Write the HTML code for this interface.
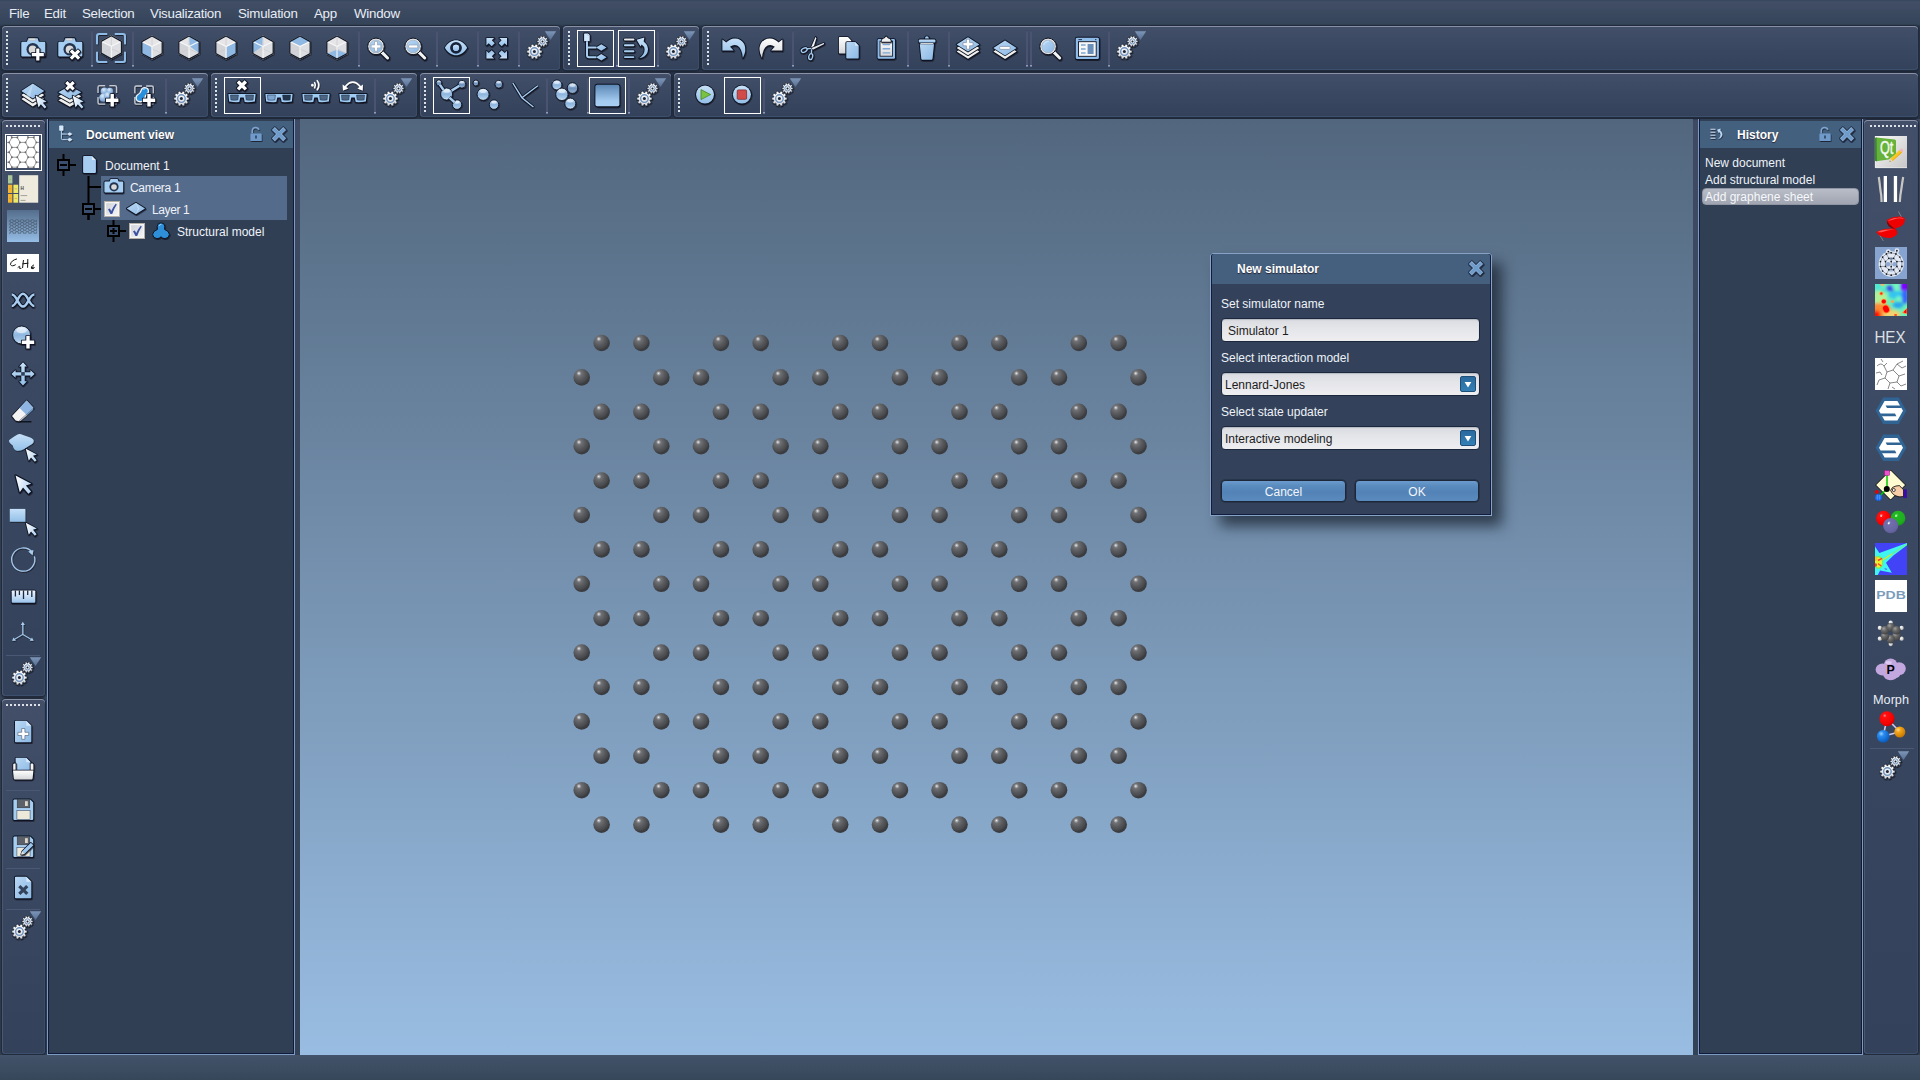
<!DOCTYPE html><html><head><meta charset="utf-8"><title>SAMSON</title><style>
*{box-sizing:border-box;margin:0;padding:0}
html,body{width:1920px;height:1080px;overflow:hidden}
body{position:relative;background:linear-gradient(#3e4a63 119px,#38465b 570px,#334256 1055px);font-family:"Liberation Sans",sans-serif;font-size:12px;color:#e9eef6}
.a{position:absolute}
#menubar{left:0;top:0;width:1920px;height:26px;background:linear-gradient(#364659 0,#424e66 2px,#344459 24px,#2c394c 26px)}
#menubar span{position:absolute;top:6px;font-size:13.3px;letter-spacing:-0.25px;line-height:15px;color:#e8edf5;white-space:nowrap}
#tbarea{left:0;top:26px;width:1920px;height:93px;background:#28344a}
.tb{position:absolute;border-radius:4px;background:linear-gradient(#434f69 0%,#3a4861 45%,#33425a 100%);box-shadow:inset 0 1px 0 #8891a6,inset 1px 0 0 #4a5770,inset -1px 0 0 #3b4c68,inset 0 -1px 0 #3c4f6d,0 0 0 1px #222b3c,0 1px 2px 1px #1d2533}
.hd{position:absolute;width:2px;background:repeating-linear-gradient(#dde1e8 0 2px,transparent 2px 4px)}
.hdh{position:absolute;height:2px;background:repeating-linear-gradient(90deg,#dde1e8 0 2px,transparent 2px 4px)}
.sep{position:absolute;width:2px;background:linear-gradient(#3a4560 0,#4a5372 2px,#4a5372 calc(100% - 2.5px),#8f9bbe calc(100% - 1.5px),#6a7698 calc(100% - 0.5px),#3a4560 100%)}
.seph{position:absolute;height:1px;background:#4b5875}
.sel{position:absolute;border:1px solid #fff;width:37px;height:37px}
.ic{position:absolute;overflow:visible}
#status{left:0;top:1055px;width:1920px;height:25px;background:linear-gradient(#42536a,#37475a)}
.panel{position:absolute;background:#303f54;box-shadow:inset 1px 0 0 #7e9ac0,inset -1px 0 0 #7e9ac0,inset 0 -1px 0 #7e9ac0,inset 2px 0 0 #0e1b3c,inset -2px 0 0 #0e1b3c,inset 0 -2px 0 #0e1b3c}
.phead{position:absolute;left:2px;right:2px;top:2px;height:27px;background:#44607f}
.phead b{position:absolute;top:7px;font-size:12px;line-height:15px;color:#fff;white-space:nowrap;text-shadow:0 1px 1px #223}
#view{left:300px;top:119px;width:1393px;height:936px;background:linear-gradient(#52677e,#99bde2)}
.t{position:absolute;white-space:nowrap;font-size:12px;line-height:14px;color:#eef2f8}
</style></head><body>
<svg width="0" height="0" style="position:absolute"><defs>
<linearGradient id="gb" x1="0" y1="0" x2="0" y2="1"><stop offset="0" stop-color="#c6e0f8"/><stop offset="1" stop-color="#93bfe8"/></linearGradient>
<linearGradient id="gb2" x1="0" y1="0" x2="1" y2="1"><stop offset="0" stop-color="#b9d8f5"/><stop offset="1" stop-color="#8db9e4"/></linearGradient>
<linearGradient id="gw" x1="0" y1="0" x2="0" y2="1"><stop offset="0" stop-color="#ffffff"/><stop offset="1" stop-color="#d4d6da"/></linearGradient>
<linearGradient id="gsq" x1="0" y1="0" x2="0" y2="1"><stop offset="0" stop-color="#5c86b4"/><stop offset="0.75" stop-color="#a3cbf0"/><stop offset="1" stop-color="#a8d0f4"/></linearGradient>
<linearGradient id="gtri" x1="0" y1="0" x2="0" y2="1"><stop offset="0" stop-color="#7d96b8"/><stop offset="1" stop-color="#566f92"/></linearGradient>
<linearGradient id="gview" x1="0" y1="0" x2="0" y2="1"><stop offset="0" stop-color="#546d8c"/><stop offset="1" stop-color="#96bde6"/></linearGradient>
<linearGradient id="gqt" x1="0" y1="0" x2="1" y2="1"><stop offset="0" stop-color="#fafafa"/><stop offset="1" stop-color="#c6c6c6"/></linearGradient>
<linearGradient id="bb" x1="0" y1="0" x2="0" y2="1"><stop offset="0" stop-color="#eef6fd"/><stop offset="0.22" stop-color="#b4d2f0"/><stop offset="0.5" stop-color="#8eb5de"/><stop offset="0.8" stop-color="#a6c9ea"/><stop offset="1" stop-color="#e2f1fc"/></linearGradient>
<linearGradient id="bbd" x1="0" y1="0" x2="0" y2="1"><stop offset="0" stop-color="#d4e4f4"/><stop offset="0.25" stop-color="#94b4d8"/><stop offset="0.55" stop-color="#6f90b8"/><stop offset="0.85" stop-color="#8aa9cc"/><stop offset="1" stop-color="#c4d8ec"/></linearGradient>
<radialGradient id="gr" cx="0.35" cy="0.3" r="0.7"><stop offset="0" stop-color="#ff8a8a"/><stop offset="0.18" stop-color="#ff1010"/><stop offset="0.8" stop-color="#f40000"/><stop offset="1" stop-color="#d80000"/></radialGradient>
<radialGradient id="gg" cx="0.4" cy="0.3" r="0.7"><stop offset="0" stop-color="#8fe08f"/><stop offset="0.18" stop-color="#22b822"/><stop offset="0.8" stop-color="#1eae1e"/><stop offset="1" stop-color="#189a18"/></radialGradient>
<radialGradient id="gp" cx="0.4" cy="0.3" r="0.7"><stop offset="0" stop-color="#d0d0f0"/><stop offset="0.15" stop-color="#7070ac"/><stop offset="0.8" stop-color="#6866a2"/><stop offset="1" stop-color="#5e5c98"/></radialGradient>
<radialGradient id="gbl" cx="0.35" cy="0.3" r="0.7"><stop offset="0" stop-color="#9ad0ff"/><stop offset="0.3" stop-color="#2a8cf0"/><stop offset="1" stop-color="#0a5cc0"/></radialGradient>
<radialGradient id="gor" cx="0.35" cy="0.3" r="0.7"><stop offset="0" stop-color="#ffe09a"/><stop offset="0.3" stop-color="#f5a81c"/><stop offset="1" stop-color="#c87800"/></radialGradient>
<radialGradient id="gc" cx="0.35" cy="0.3" r="0.7"><stop offset="0" stop-color="#a0a0a0"/><stop offset="0.4" stop-color="#6a6a6a"/><stop offset="1" stop-color="#444"/></radialGradient>
<radialGradient id="gh" cx="0.35" cy="0.3" r="0.7"><stop offset="0" stop-color="#fff"/><stop offset="1" stop-color="#bbb"/></radialGradient>
<linearGradient id="gcur" x1="0" y1="0" x2="1" y2="1"><stop offset="0" stop-color="#ffffff"/><stop offset="1" stop-color="#a9cdf0"/></linearGradient>
<linearGradient id="grul" x1="0" y1="0" x2="0" y2="1"><stop offset="0" stop-color="#f2f8fe"/><stop offset="1" stop-color="#9ac4ec"/></linearGradient>
<filter id="bl1"><feGaussianBlur stdDeviation="0.7"/></filter>
<radialGradient id="br" cx="0.4" cy="0.3" r="0.75"><stop offset="0" stop-color="#dcebfa"/><stop offset="0.45" stop-color="#9dc0e6"/><stop offset="0.85" stop-color="#7a9fcb"/><stop offset="1" stop-color="#6488b4"/></radialGradient>
<filter id="bl2"><feGaussianBlur stdDeviation="0.6"/></filter>
<filter id="sh" x="-30%" y="-30%" width="170%" height="170%"><feDropShadow dx="0.6" dy="1" stdDeviation="0.7" flood-color="#0a0f1a" flood-opacity="0.75"/></filter>
</defs></svg>
<div id="menubar" class="a">
<span style="left:9px">File</span>
<span style="left:44px">Edit</span>
<span style="left:82px">Selection</span>
<span style="left:150px">Visualization</span>
<span style="left:238px">Simulation</span>
<span style="left:314px">App</span>
<span style="left:354px">Window</span>
</div>
<div id="tbarea" class="a"></div>
<div class="tb" style="left:2px;top:26px;width:558px;height:44px"><div class="hd" style="left:4px;top:5px;height:34px"></div><svg class="ic" style="left:14px;top:6px" width="32" height="32" viewBox="0 0 32 32"><g stroke="#0c1322" stroke-width="1.7" stroke-linejoin="round" paint-order="stroke" filter="url(#sh)"><path d="M6.4 9.8h4.6l1.2-3.6h9.4l1.2 3.6h5.4q1.1 0 1.1 1.1v12.6q0 1.1-1.1 1.1h-21.8q-1.1 0-1.1-1.1v-12.6q0-1.1 1.1-1.1z" fill="#a6cdf2"/><rect x="13" y="6.6" width="6.6" height="1.8" rx="0.9" fill="#ddd" stroke="#8a8a8a" stroke-width="0.5"/></g><circle cx="16.8" cy="17.2" r="6.3" fill="#23344e" stroke="none"/><circle cx="16.6" cy="17.4" r="3.9" fill="#d9d9d9" stroke="none"/><g stroke="#0c1322" stroke-width="1.7" stroke-linejoin="round" paint-order="stroke" filter="url(#sh)"><path d="M20.2 16.6h3.2v4.4h4.4v3.2h-4.4v4.4h-3.2v-4.4h-4.4v-3.2h4.4z" fill="#fff"/></g></svg><svg class="ic" style="left:51px;top:6px" width="32" height="32" viewBox="0 0 32 32"><g stroke="#0c1322" stroke-width="1.7" stroke-linejoin="round" paint-order="stroke" filter="url(#sh)"><path d="M6.4 9.8h4.6l1.2-3.6h9.4l1.2 3.6h5.4q1.1 0 1.1 1.1v12.6q0 1.1-1.1 1.1h-21.8q-1.1 0-1.1-1.1v-12.6q0-1.1 1.1-1.1z" fill="#a6cdf2"/><rect x="13" y="6.6" width="6.6" height="1.8" rx="0.9" fill="#ddd" stroke="#8a8a8a" stroke-width="0.5"/></g><circle cx="16.8" cy="17.2" r="6.3" fill="#23344e" stroke="none"/><circle cx="16.6" cy="17.4" r="3.9" fill="#d9d9d9" stroke="none"/><g stroke="#0c1322" stroke-width="1.7" stroke-linejoin="round" paint-order="stroke" filter="url(#sh)"><g transform="rotate(45 22 22.6)"><path d="M20.4 16.8h3.2v4.2h4.2v3.2h-4.2v4.2h-3.2v-4.2h-4.2v-3.2h4.2z" fill="#fff"/></g></g></svg><svg class="ic" style="left:93px;top:6px" width="32" height="32" viewBox="0 0 32 32"><g fill="none" stroke="#8ebbe6" stroke-width="2" filter="url(#sh)"><path d="M2 12.2v-8.2q0 -2 2 -2h8.2" /><path d="M30 12.2v-8.2q0 -2 -2 -2h-8.2" /><path d="M2 19.8v8.2q0 2 2 2h8.2" /><path d="M30 19.8v8.2q0 2 -2 2h-8.2" /></g><g transform="translate(0.3,-0.3)"><g filter="url(#sh)"><polygon points="16,4.05 26.2378,9.62622 26.237,21.4751 16,27.15 5.76296,21.4751 5.76221,9.62622" fill="#dcdde0"/><polygon points="16,3.4 26.8,9.3 16,14.6 5.2,9.3" fill="#e6e6e8"/><polygon points="5.2,9.3 16,14.6 16,27.8 5.2,21.8" fill="#d3d4d8"/><polygon points="16,14.6 26.8,9.3 26.8,21.8 16,27.8" fill="#dedfe2"/><path d="M16 17L5.2 21.8M16 17L26.8 21.8M16 17L16 3.4" stroke="#cbccd0" stroke-width="0.8" fill="none"/><path d="M16 14.6L5.8 9.6M16 14.6L26.2 9.6M16 14.6L16 27.2" stroke="#f8f8f8" stroke-width="1.1" fill="none"/><polygon points="16,4.05 26.2378,9.62622 26.237,21.4751 16,27.15 5.76296,21.4751 5.76221,9.62622" fill="none" stroke="#141a28" stroke-width="1.3" stroke-linejoin="round"/></g></g></svg><svg class="ic" style="left:134px;top:6px" width="32" height="32" viewBox="0 0 32 32"><g filter="url(#sh)"><polygon points="16,4.05 26.2378,9.62622 26.237,21.4751 16,27.15 5.76296,21.4751 5.76221,9.62622" fill="#dcdde0"/><polygon points="16,3.4 26.8,9.3 16,14.6 5.2,9.3" fill="#e6e6e8"/><polygon points="5.2,9.3 16,14.6 16,27.8 5.2,21.8" fill="#d3d4d8"/><polygon points="16,14.6 26.8,9.3 26.8,21.8 16,27.8" fill="#dedfe2"/><path d="M16 17L5.2 21.8M16 17L26.8 21.8M16 17L16 3.4" stroke="#cbccd0" stroke-width="0.8" fill="none"/><polygon points="5.55795,9.90156 15.4263,15.0011 15.652,27.1926 5.79113,21.4251" fill="#8fb8e2"/><path d="M16 14.6L5.8 9.6M16 14.6L26.2 9.6M16 14.6L16 27.2" stroke="#f8f8f8" stroke-width="1.1" fill="none"/><polygon points="16,4.05 26.2378,9.62622 26.237,21.4751 16,27.15 5.76296,21.4751 5.76221,9.62622" fill="none" stroke="#141a28" stroke-width="1.3" stroke-linejoin="round"/></g></svg><svg class="ic" style="left:171px;top:6px" width="32" height="32" viewBox="0 0 32 32"><g filter="url(#sh)"><polygon points="16,4.05 26.2378,9.62622 26.237,21.4751 16,27.15 5.76296,21.4751 5.76221,9.62622" fill="#dcdde0"/><polygon points="16,3.4 26.8,9.3 16,14.6 5.2,9.3" fill="#e6e6e8"/><polygon points="5.2,9.3 16,14.6 16,27.8 5.2,21.8" fill="#d3d4d8"/><polygon points="16,14.6 26.8,9.3 26.8,21.8 16,27.8" fill="#dedfe2"/><path d="M16 17L5.2 21.8M16 17L26.8 21.8M16 17L16 3.4" stroke="#cbccd0" stroke-width="0.8" fill="none"/><polygon points="16.3639,3.998 26.1869,9.63778 26.4548,21.1911 16.6429,14.3232" fill="#8fb8e2"/><path d="M16 14.6L5.8 9.6M16 14.6L26.2 9.6M16 14.6L16 27.2" stroke="#f8f8f8" stroke-width="1.1" fill="none"/><polygon points="16,4.05 26.2378,9.62622 26.237,21.4751 16,27.15 5.76296,21.4751 5.76221,9.62622" fill="none" stroke="#141a28" stroke-width="1.3" stroke-linejoin="round"/></g></svg><svg class="ic" style="left:208px;top:6px" width="32" height="32" viewBox="0 0 32 32"><g filter="url(#sh)"><polygon points="16,4.05 26.2378,9.62622 26.237,21.4751 16,27.15 5.76296,21.4751 5.76221,9.62622" fill="#dcdde0"/><polygon points="16,3.4 26.8,9.3 16,14.6 5.2,9.3" fill="#e6e6e8"/><polygon points="5.2,9.3 16,14.6 16,27.8 5.2,21.8" fill="#d3d4d8"/><polygon points="16,14.6 26.8,9.3 26.8,21.8 16,27.8" fill="#dedfe2"/><path d="M16 17L5.2 21.8M16 17L26.8 21.8M16 17L16 3.4" stroke="#cbccd0" stroke-width="0.8" fill="none"/><polygon points="16.5737,15.0011 26.442,9.90156 26.2089,21.4251 16.348,27.1926" fill="#8fb8e2"/><path d="M16 14.6L5.8 9.6M16 14.6L26.2 9.6M16 14.6L16 27.2" stroke="#f8f8f8" stroke-width="1.1" fill="none"/><polygon points="16,4.05 26.2378,9.62622 26.237,21.4751 16,27.15 5.76296,21.4751 5.76221,9.62622" fill="none" stroke="#141a28" stroke-width="1.3" stroke-linejoin="round"/></g></svg><svg class="ic" style="left:245px;top:6px" width="32" height="32" viewBox="0 0 32 32"><g filter="url(#sh)"><polygon points="16,4.05 26.2378,9.62622 26.237,21.4751 16,27.15 5.76296,21.4751 5.76221,9.62622" fill="#dcdde0"/><polygon points="16,3.4 26.8,9.3 16,14.6 5.2,9.3" fill="#e6e6e8"/><polygon points="5.2,9.3 16,14.6 16,27.8 5.2,21.8" fill="#d3d4d8"/><polygon points="16,14.6 26.8,9.3 26.8,21.8 16,27.8" fill="#dedfe2"/><path d="M16 17L5.2 21.8M16 17L26.8 21.8M16 17L16 3.4" stroke="#cbccd0" stroke-width="0.8" fill="none"/><polygon points="15.6361,3.998 15.3571,14.3232 5.54523,21.1911 5.81311,9.63778" fill="#8fb8e2"/><path d="M16 14.6L5.8 9.6M16 14.6L26.2 9.6M16 14.6L16 27.2" stroke="#f8f8f8" stroke-width="1.1" fill="none"/><polygon points="16,4.05 26.2378,9.62622 26.237,21.4751 16,27.15 5.76296,21.4751 5.76221,9.62622" fill="none" stroke="#141a28" stroke-width="1.3" stroke-linejoin="round"/></g></svg><svg class="ic" style="left:282px;top:6px" width="32" height="32" viewBox="0 0 32 32"><g filter="url(#sh)"><polygon points="16,4.05 26.2378,9.62622 26.237,21.4751 16,27.15 5.76296,21.4751 5.76221,9.62622" fill="#dcdde0"/><polygon points="16,3.4 26.8,9.3 16,14.6 5.2,9.3" fill="#e6e6e8"/><polygon points="5.2,9.3 16,14.6 16,27.8 5.2,21.8" fill="#d3d4d8"/><polygon points="16,14.6 26.8,9.3 26.8,21.8 16,27.8" fill="#dedfe2"/><path d="M16 17L5.2 21.8M16 17L26.8 21.8M16 17L16 3.4" stroke="#cbccd0" stroke-width="0.8" fill="none"/><polygon points="16,4.1 26.1001,9.29028 16,13.9 5.89993,9.29028" fill="#8fb8e2"/><path d="M16 14.6L5.8 9.6M16 14.6L26.2 9.6M16 14.6L16 27.2" stroke="#f8f8f8" stroke-width="1.1" fill="none"/><polygon points="16,4.05 26.2378,9.62622 26.237,21.4751 16,27.15 5.76296,21.4751 5.76221,9.62622" fill="none" stroke="#141a28" stroke-width="1.3" stroke-linejoin="round"/></g></svg><svg class="ic" style="left:319px;top:6px" width="32" height="32" viewBox="0 0 32 32"><g filter="url(#sh)"><polygon points="16,4.05 26.2378,9.62622 26.237,21.4751 16,27.15 5.76296,21.4751 5.76221,9.62622" fill="#dcdde0"/><polygon points="16,3.4 26.8,9.3 16,14.6 5.2,9.3" fill="#e6e6e8"/><polygon points="5.2,9.3 16,14.6 16,27.8 5.2,21.8" fill="#d3d4d8"/><polygon points="16,14.6 26.8,9.3 26.8,21.8 16,27.8" fill="#dedfe2"/><path d="M16 17L5.2 21.8M16 17L26.8 21.8M16 17L16 3.4" stroke="#cbccd0" stroke-width="0.8" fill="none"/><polygon points="16,17.7 26.1003,21.8194 16,27.1 5.89973,21.8194" fill="#8fb8e2"/><path d="M16 14.6L5.8 9.6M16 14.6L26.2 9.6M16 14.6L16 27.2" stroke="#f8f8f8" stroke-width="1.1" fill="none"/><polygon points="16,4.05 26.2378,9.62622 26.237,21.4751 16,27.15 5.76296,21.4751 5.76221,9.62622" fill="none" stroke="#141a28" stroke-width="1.3" stroke-linejoin="round"/></g></svg><svg class="ic" style="left:360px;top:6px" width="32" height="32" viewBox="0 0 32 32"><g filter="url(#sh)"><path d="M20.5 20.9L25.6 26" stroke="#0c1322" stroke-width="5" stroke-linecap="round"/><path d="M20 20.4L25.6 26" stroke="#f4f4f4" stroke-width="3" stroke-linecap="round"/><circle cx="14" cy="14.4" r="8.3" fill="#eaeaea" stroke="#0c1322" stroke-width="1"/><circle cx="14" cy="14.4" r="6.4" fill="url(#gb2)" stroke="#9aa4b0" stroke-width="0.6"/><g stroke="#8a97a8" stroke-width="0.6"><path d="M12.5 9.6h3v3.3h3.3v3h-3.3v3.3h-3v-3.3h-3.3v-3h3.3z" fill="#fff"/></g></g></svg><svg class="ic" style="left:397px;top:6px" width="32" height="32" viewBox="0 0 32 32"><g filter="url(#sh)"><path d="M20.6 20.9L25.7 26" stroke="#0c1322" stroke-width="5" stroke-linecap="round"/><path d="M20.1 20.4L25.7 26" stroke="#f4f4f4" stroke-width="3" stroke-linecap="round"/><circle cx="14.1" cy="14.4" r="8.3" fill="#eaeaea" stroke="#0c1322" stroke-width="1"/><circle cx="14.1" cy="14.4" r="6.4" fill="url(#gb2)" stroke="#9aa4b0" stroke-width="0.6"/><rect x="9.5" y="13" width="9.2" height="2.9" rx="1" fill="#fff" stroke="#8a97a8" stroke-width="0.6"/></g></svg><svg class="ic" style="left:438px;top:6px" width="32" height="32" viewBox="0 0 32 32"><g stroke="#0c1322" stroke-width="1.7" stroke-linejoin="round" paint-order="stroke" filter="url(#sh)"><path d="M4.9 15.8 C8 10.2 12 8.3 16 8.3 C20 8.3 24 10.2 27.1 15.8 C24 21.4 20 23.3 16 23.3 C12 23.3 8 21.4 4.9 15.8Z" fill="url(#gb)"/></g><circle cx="16" cy="15.8" r="4.5" fill="none" stroke="#16233a" stroke-width="2.8"/><circle cx="16" cy="15.8" r="3.1" fill="url(#gb)"/></svg><svg class="ic" style="left:479px;top:6px" width="32" height="32" viewBox="0 0 32 32"><g stroke="#0c1322" stroke-width="1.4" stroke-linejoin="round" paint-order="stroke" filter="url(#sh)"><path d="M0 0 L7 0 L7 7 L4.9 4.9 L2.2 7.6 L-0.6 4.8 L2.1 2.1 Z" transform="translate(26,5.9) scale(1.1) translate(-7,0)" fill="url(#gb)"/><path d="M0 0 L7 0 L7 7 L4.9 4.9 L2.2 7.6 L-0.6 4.8 L2.1 2.1 Z" transform="translate(5.4,5.9) scale(-1.1,1.1) translate(-7,0)" fill="url(#gb)"/><path d="M0 0 L7 0 L7 7 L4.9 4.9 L2.2 7.6 L-0.6 4.8 L2.1 2.1 Z" transform="translate(26,26.5) scale(1.1,-1.1) translate(-7,0)" fill="url(#gb)"/><path d="M0 0 L7 0 L7 7 L4.9 4.9 L2.2 7.6 L-0.6 4.8 L2.1 2.1 Z" transform="translate(5.4,26.5) scale(-1.1,-1.1) translate(-7,0)" fill="url(#gb)"/></g></svg><svg class="ic" style="left:522px;top:6px" width="32" height="32" viewBox="0 0 32 32"><g filter="url(#sh)"><path d="M17.99 18.30 L17.99 20.90 L16.25 20.95 L15.92 21.95 L17.30 23.01 L15.78 25.11 L14.34 24.13 L13.49 24.75 L13.98 26.42 L11.51 27.22 L10.93 25.58 L9.87 25.58 L9.29 27.22 L6.82 26.42 L7.31 24.75 L6.46 24.13 L5.02 25.11 L3.50 23.01 L4.88 21.95 L4.55 20.95 L2.81 20.90 L2.81 18.30 L4.55 18.25 L4.88 17.25 L3.50 16.19 L5.02 14.09 L6.46 15.07 L7.31 14.45 L6.82 12.78 L9.29 11.98 L9.87 13.62 L10.93 13.62 L11.51 11.98 L13.98 12.78 L13.49 14.45 L14.34 15.07 L15.78 14.09 L17.30 16.19 L15.92 17.25 L16.25 18.25 Z" fill="url(#gw)" stroke="#1a2233" stroke-width="0.7" stroke-linejoin="round"/><circle cx="10.4" cy="19.6" r="3.8" fill="none" stroke="#6f93bf" stroke-width="1.4"/><circle cx="10.4" cy="19.6" r="1.5" fill="#1c2638"/><path d="M24.02 8.45 L24.02 10.35 L22.69 10.36 L22.46 11.08 L23.52 11.88 L22.41 13.41 L21.32 12.64 L20.71 13.09 L21.10 14.36 L19.31 14.94 L18.88 13.68 L18.12 13.68 L17.69 14.94 L15.90 14.36 L16.29 13.09 L15.68 12.64 L14.59 13.41 L13.48 11.88 L14.54 11.08 L14.31 10.36 L12.98 10.35 L12.98 8.45 L14.31 8.44 L14.54 7.72 L13.48 6.92 L14.59 5.39 L15.68 6.16 L16.29 5.71 L15.90 4.44 L17.69 3.86 L18.12 5.12 L18.88 5.12 L19.31 3.86 L21.10 4.44 L20.71 5.71 L21.32 6.16 L22.41 5.39 L23.52 6.92 L22.46 7.72 L22.69 8.44 Z" fill="url(#gw)" stroke="#1a2233" stroke-width="0.7" stroke-linejoin="round"/><circle cx="18.5" cy="9.4" r="2.6" fill="none" stroke="#6f93bf" stroke-width="1"/><circle cx="18.5" cy="9.4" r="1" fill="#1c2638"/></g><path d="M20.8 -0.8 L32.2 -0.8 L26.5 8 Z" fill="url(#gtri)"/></svg><div class="sep" style="left:89px;top:4px;height:37px"></div><div class="sep" style="left:130px;top:4px;height:37px"></div><div class="sep" style="left:356px;top:4px;height:37px"></div><div class="sep" style="left:434px;top:4px;height:37px"></div><div class="sep" style="left:475px;top:4px;height:37px"></div><div class="sep" style="left:516px;top:4px;height:37px"></div></div>
<div class="tb" style="left:563px;top:26px;width:136px;height:44px"><div class="hd" style="left:5px;top:5px;height:34px"></div><div class="sel" style="left:14px;top:4px"></div><div class="sel" style="left:55px;top:4px"></div><svg class="ic" style="left:16px;top:6px" width="32" height="32" viewBox="0 0 32 32"><g stroke="#0c1322" stroke-width="1.7" stroke-linejoin="round" paint-order="stroke" filter="url(#sh)"><path d="M5.6 1.4h3.2l1.9 1.9v5.4q0 .5-.5.5h-4.6q-.5 0-.5-.5v-6.8q0-.5.5-.5z" fill="#cfe6fb"/><path d="M8 9.2v14q0 2 2 2h7.4M8 15.5h9.4" fill="none" stroke-width="3.6" stroke-linecap="butt"/><path d="M17.1 15.5L22.3 12.2L27.5 15.5L22.3 18.8Z" fill="url(#gb2)"/><path d="M17.1 25.3L22.3 22L27.5 25.3L22.3 28.6Z" fill="url(#gb2)"/></g><path d="M8 9.2v14q0 2 2 2h7.4M8 15.5h9.4" fill="none" stroke="#a9cdf0" stroke-width="2"/><path d="M8.8 1.4v1.9h1.9" fill="#f4f9fe" stroke="#7d93ad" stroke-width="0.4"/></svg><svg class="ic" style="left:57px;top:6px" width="32" height="32" viewBox="0 0 32 32"><g stroke="#0c1322" filter="url(#sh)"><path d="M4.9 7.5h8.6" stroke-width="3.4" stroke-linecap="round" fill="none"/><path d="M4.9 13.3h8.6" stroke-width="3.4" stroke-linecap="round" fill="none"/><path d="M4.9 19.3h8.6" stroke-width="3.4" stroke-linecap="round" fill="none"/><path d="M4.9 25.1h8.6" stroke-width="3.4" stroke-linecap="round" fill="none"/></g><path d="M4.9 7.5h8.6" stroke="#e6e8ec" stroke-width="1.9" stroke-linecap="round" fill="none"/><path d="M4.9 13.3h8.6" stroke="#b5d6f5" stroke-width="1.9" stroke-linecap="round" fill="none"/><path d="M4.9 19.3h8.6" stroke="#a9cdf0" stroke-width="1.9" stroke-linecap="round" fill="none"/><path d="M4.9 25.1h8.6" stroke="#a3c9ee" stroke-width="1.9" stroke-linecap="round" fill="none"/><g stroke="#0c1322" stroke-width="1.7" stroke-linejoin="round" paint-order="stroke" filter="url(#sh)"><path d="M16.6 7.8 L24.4 5.6 L23.6 9.6 Q29.4 14 27.6 20 Q25.8 25.4 19.2 26.2 Q24.6 23 24.6 17.6 Q24.4 14 21.6 12.4 L20.6 14.6 Z" fill="url(#gb)"/></g></svg><svg class="ic" style="left:100px;top:6px" width="32" height="32" viewBox="0 0 32 32"><g filter="url(#sh)"><path d="M17.99 18.30 L17.99 20.90 L16.25 20.95 L15.92 21.95 L17.30 23.01 L15.78 25.11 L14.34 24.13 L13.49 24.75 L13.98 26.42 L11.51 27.22 L10.93 25.58 L9.87 25.58 L9.29 27.22 L6.82 26.42 L7.31 24.75 L6.46 24.13 L5.02 25.11 L3.50 23.01 L4.88 21.95 L4.55 20.95 L2.81 20.90 L2.81 18.30 L4.55 18.25 L4.88 17.25 L3.50 16.19 L5.02 14.09 L6.46 15.07 L7.31 14.45 L6.82 12.78 L9.29 11.98 L9.87 13.62 L10.93 13.62 L11.51 11.98 L13.98 12.78 L13.49 14.45 L14.34 15.07 L15.78 14.09 L17.30 16.19 L15.92 17.25 L16.25 18.25 Z" fill="url(#gw)" stroke="#1a2233" stroke-width="0.7" stroke-linejoin="round"/><circle cx="10.4" cy="19.6" r="3.8" fill="none" stroke="#6f93bf" stroke-width="1.4"/><circle cx="10.4" cy="19.6" r="1.5" fill="#1c2638"/><path d="M24.02 8.45 L24.02 10.35 L22.69 10.36 L22.46 11.08 L23.52 11.88 L22.41 13.41 L21.32 12.64 L20.71 13.09 L21.10 14.36 L19.31 14.94 L18.88 13.68 L18.12 13.68 L17.69 14.94 L15.90 14.36 L16.29 13.09 L15.68 12.64 L14.59 13.41 L13.48 11.88 L14.54 11.08 L14.31 10.36 L12.98 10.35 L12.98 8.45 L14.31 8.44 L14.54 7.72 L13.48 6.92 L14.59 5.39 L15.68 6.16 L16.29 5.71 L15.90 4.44 L17.69 3.86 L18.12 5.12 L18.88 5.12 L19.31 3.86 L21.10 4.44 L20.71 5.71 L21.32 6.16 L22.41 5.39 L23.52 6.92 L22.46 7.72 L22.69 8.44 Z" fill="url(#gw)" stroke="#1a2233" stroke-width="0.7" stroke-linejoin="round"/><circle cx="18.5" cy="9.4" r="2.6" fill="none" stroke="#6f93bf" stroke-width="1"/><circle cx="18.5" cy="9.4" r="1" fill="#1c2638"/></g><path d="M20.8 -0.8 L32.2 -0.8 L26.5 8 Z" fill="url(#gtri)"/></svg><div class="sep" style="left:53px;top:4px;height:37px"></div><div class="sep" style="left:94px;top:4px;height:37px"></div></div>
<div class="tb" style="left:702px;top:26px;width:1216px;height:44px"><div class="hd" style="left:5px;top:5px;height:34px"></div><svg class="ic" style="left:15px;top:6px" width="32" height="32" viewBox="0 0 32 32"><g stroke="#0c1322" stroke-width="1.7" stroke-linejoin="round" paint-order="stroke" filter="url(#sh)"><path d="M5.4 7.4 L5.4 18.6 L16.6 18.6 L13 14.8 Q16.8 12 20.6 13.8 Q25 16.4 25.8 26 Q30 18.4 27.2 12 Q24.2 6.4 17.8 6.4 Q12.6 6.6 9.2 10.6 Z" fill="url(#gb)"/></g></svg><svg class="ic" style="left:52px;top:6px" width="32" height="32" viewBox="0 0 32 32"><g stroke="#0c1322" stroke-width="1.7" stroke-linejoin="round" paint-order="stroke" filter="url(#sh)"><path d="M5.4 7.4 L5.4 18.6 L16.6 18.6 L13 14.8 Q16.8 12 20.6 13.8 Q25 16.4 25.8 26 Q30 18.4 27.2 12 Q24.2 6.4 17.8 6.4 Q12.6 6.6 9.2 10.6 Z" fill="url(#gw)" transform="translate(33.8,0) scale(-1,1)"/></g></svg><svg class="ic" style="left:93px;top:6px" width="32" height="32" viewBox="0 0 32 32"><g stroke="#0c1322" stroke-width="1.5" stroke-linejoin="round" paint-order="stroke" filter="url(#sh)"><path d="M20.6 4.8 L21.3 6.4 L17.8 17.4 L15.6 16.4 Z" fill="#f4f4f4"/><path d="M29.1 10.8 L28.9 12.3 L17.4 18 L16 16.2 Z" fill="#e2e5ea"/></g><g fill="none" stroke="#0c1322" stroke-width="2.9" filter="url(#sh)"><ellipse cx="9.2" cy="18.1" rx="3.1" ry="1.9" transform="rotate(-27 9.2 18.1)"/><ellipse cx="15.7" cy="24.6" rx="1.9" ry="3" transform="rotate(14 15.7 24.6)"/><path d="M12 16.8 L16.2 16.4 M16.4 21.6 L16.6 17.2"/></g><g fill="none" stroke="#a3c9ee" stroke-width="1.4"><ellipse cx="9.2" cy="18.1" rx="3.1" ry="1.9" transform="rotate(-27 9.2 18.1)"/><ellipse cx="15.7" cy="24.6" rx="1.9" ry="3" transform="rotate(14 15.7 24.6)"/><path d="M12 16.8 L16.2 16.4 M16.4 21.6 L16.6 17.2"/></g></svg><svg class="ic" style="left:130px;top:6px" width="32" height="32" viewBox="0 0 32 32"><g stroke="#0c1322" stroke-width="1.7" stroke-linejoin="round" paint-order="stroke" filter="url(#sh)"><path d="M7.6 5.1h8.1l3.6 3.6v12.1q0 .7-.7.7h-11q-.7 0-.7-.7v-15q0-.7.7-.7z" fill="url(#gw)"/><path d="M15.7 5.1v3.6h3.6z" fill="#fff" stroke="none"/></g><g stroke="#0c1322" stroke-width="1.7" stroke-linejoin="round" paint-order="stroke" filter="url(#sh)"><path d="M15 10.1h8.1l3.6 3.6v12.1q0 .7-.7.7h-11q-.7 0-.7-.7v-15q0-.7.7-.7z" fill="url(#gb2)"/><path d="M23.1 10.1v3.6h3.6z" fill="#d4e8fa" stroke="none"/></g></svg><svg class="ic" style="left:167px;top:6px" width="32" height="32" viewBox="0 0 32 32"><g stroke="#0c1322" stroke-width="1.7" stroke-linejoin="round" paint-order="stroke" filter="url(#sh)"><rect x="8.6" y="7" width="17.4" height="19.8" rx="1.2" fill="#8ebbe8"/></g><rect x="11" y="9.2" width="12.6" height="15" fill="url(#gw)" stroke="#0c1322" stroke-width="0.8"/><g stroke="#0c1322" stroke-width="1.6" stroke-linejoin="round" paint-order="stroke" filter="url(#sh)"><path d="M12.6 9.8 Q12.6 6.8 15.2 6.6 L17.2 4.4 L19.2 6.6 Q21.8 6.8 21.8 9.8 Z" fill="#f0f0f0"/></g><path d="M13.6 12.6h7.6M13.6 16.7h7.6M13.6 20.9h7.6" stroke="#7fa8d4" stroke-width="1.4"/></svg><svg class="ic" style="left:208px;top:6px" width="32" height="32" viewBox="0 0 32 32"><g stroke="#0c1322" stroke-width="1.7" stroke-linejoin="round" paint-order="stroke" filter="url(#sh)"><circle cx="16.9" cy="6.2" r="1.9" fill="#a6cdf2"/><rect x="8.8" y="7.4" width="16.6" height="3.2" rx="1.2" fill="url(#gb)"/><path d="M9.8 12.2h14.2l-1.5 14.6q-.1 1-1.1 1h-9q-1 0-1.1-1z" fill="url(#gb2)"/></g><path d="M10.4 11.6h13" stroke="#e6e6e6" stroke-width="1"/></svg><svg class="ic" style="left:249px;top:6px" width="32" height="32" viewBox="0 0 32 32"><g stroke="#0c1322" stroke-width="1.7" stroke-linejoin="round" paint-order="stroke" filter="url(#sh)"><path d="M5.6 19.6L17 12.4L28.4 19.6L17 26.8Z" fill="#f0f0ee"/><path d="M5.6 16L17 8.8L28.4 16L17 23.2Z" fill="#f0f0ee"/><path d="M5.6 12.4L17 5.2L28.4 12.4L17 19.6Z" fill="url(#gb2)"/></g><g stroke="#7d8aa0" stroke-width="0.7"><path d="M15.4 7.2h3.2v3.4h3.4v3.2h-3.4v3.4h-3.2v-3.4h-3.4v-3.2h3.4z" fill="#fff"/></g></svg><svg class="ic" style="left:286px;top:6px" width="32" height="32" viewBox="0 0 32 32"><g stroke="#0c1322" stroke-width="1.7" stroke-linejoin="round" paint-order="stroke" filter="url(#sh)"><path d="M5.4 19.5L17 12L28.6 19.5L17 27Z" fill="#f0f0ee"/><path d="M5.4 15.9L17 8.4L28.6 15.9L17 23.4Z" fill="url(#gb2)"/></g><rect x="11.6" y="14.4" width="10.6" height="3" rx="1.2" fill="#fff" stroke="#7d8aa0" stroke-width="0.7"/></svg><svg class="ic" style="left:331px;top:6px" width="32" height="32" viewBox="0 0 32 32"><g filter="url(#sh)"><path d="M21.6 20.9L26.7 26" stroke="#0c1322" stroke-width="5" stroke-linecap="round"/><path d="M21.1 20.4L26.7 26" stroke="#f4f4f4" stroke-width="3" stroke-linecap="round"/><circle cx="15.1" cy="14.4" r="8.3" fill="#eaeaea" stroke="#0c1322" stroke-width="1"/><circle cx="15.1" cy="14.4" r="6.4" fill="url(#gb2)" stroke="#9aa4b0" stroke-width="0.6"/><path d="M10.5 13 Q12 9.5 16 9.4" stroke="#d6e8fa" stroke-width="1.2" fill="none" opacity=".7"/></g></svg><svg class="ic" style="left:369px;top:6px" width="32" height="32" viewBox="0 0 32 32"><g stroke="#0c1322" stroke-width="1.7" stroke-linejoin="round" paint-order="stroke" filter="url(#sh)"><rect x="4.7" y="5.7" width="23.2" height="21.4" rx="1.4" fill="#8ebbe8"/></g><path d="M7.4 7.6h3.6M24 7.6h1.4" stroke="#1b2740" stroke-width="0.9"/><rect x="7.5" y="9.7" width="17.7" height="14.6" fill="#f7f7f7" stroke="#0c1322" stroke-width="0.9"/><path d="M10 13h4.6M10 17h4.6M10 21h4.6" stroke="#7fa8d4" stroke-width="1.6"/><rect x="16.6" y="12" width="6" height="10" fill="#6a8fbb"/></svg><svg class="ic" style="left:412px;top:6px" width="32" height="32" viewBox="0 0 32 32"><g filter="url(#sh)"><path d="M17.99 18.30 L17.99 20.90 L16.25 20.95 L15.92 21.95 L17.30 23.01 L15.78 25.11 L14.34 24.13 L13.49 24.75 L13.98 26.42 L11.51 27.22 L10.93 25.58 L9.87 25.58 L9.29 27.22 L6.82 26.42 L7.31 24.75 L6.46 24.13 L5.02 25.11 L3.50 23.01 L4.88 21.95 L4.55 20.95 L2.81 20.90 L2.81 18.30 L4.55 18.25 L4.88 17.25 L3.50 16.19 L5.02 14.09 L6.46 15.07 L7.31 14.45 L6.82 12.78 L9.29 11.98 L9.87 13.62 L10.93 13.62 L11.51 11.98 L13.98 12.78 L13.49 14.45 L14.34 15.07 L15.78 14.09 L17.30 16.19 L15.92 17.25 L16.25 18.25 Z" fill="url(#gw)" stroke="#1a2233" stroke-width="0.7" stroke-linejoin="round"/><circle cx="10.4" cy="19.6" r="3.8" fill="none" stroke="#6f93bf" stroke-width="1.4"/><circle cx="10.4" cy="19.6" r="1.5" fill="#1c2638"/><path d="M24.02 8.45 L24.02 10.35 L22.69 10.36 L22.46 11.08 L23.52 11.88 L22.41 13.41 L21.32 12.64 L20.71 13.09 L21.10 14.36 L19.31 14.94 L18.88 13.68 L18.12 13.68 L17.69 14.94 L15.90 14.36 L16.29 13.09 L15.68 12.64 L14.59 13.41 L13.48 11.88 L14.54 11.08 L14.31 10.36 L12.98 10.35 L12.98 8.45 L14.31 8.44 L14.54 7.72 L13.48 6.92 L14.59 5.39 L15.68 6.16 L16.29 5.71 L15.90 4.44 L17.69 3.86 L18.12 5.12 L18.88 5.12 L19.31 3.86 L21.10 4.44 L20.71 5.71 L21.32 6.16 L22.41 5.39 L23.52 6.92 L22.46 7.72 L22.69 8.44 Z" fill="url(#gw)" stroke="#1a2233" stroke-width="0.7" stroke-linejoin="round"/><circle cx="18.5" cy="9.4" r="2.6" fill="none" stroke="#6f93bf" stroke-width="1"/><circle cx="18.5" cy="9.4" r="1" fill="#1c2638"/></g><path d="M20.8 -0.8 L32.2 -0.8 L26.5 8 Z" fill="url(#gtri)"/></svg><div class="sep" style="left:90px;top:4px;height:37px"></div><div class="sep" style="left:205px;top:4px;height:37px"></div><div class="sep" style="left:246px;top:4px;height:37px"></div><div class="sep" style="left:324px;top:4px;height:37px"></div><div class="sep" style="left:328px;top:4px;height:37px"></div><div class="sep" style="left:406px;top:4px;height:37px"></div></div>
<div class="tb" style="left:2px;top:73px;width:206px;height:44px"><div class="hd" style="left:4px;top:5px;height:34px"></div><svg class="ic" style="left:15px;top:6px" width="32" height="32" viewBox="0 0 32 32"><g stroke="#0c1322" stroke-width="1.7" stroke-linejoin="round" paint-order="stroke" filter="url(#sh)"><path d="M4.3 19.9L15.8 12.4L27.3 19.9L15.8 27.4Z" fill="#f0f0ee"/><path d="M4.3 16L15.8 8.5L27.3 16L15.8 23.5Z" fill="#f0f0ee"/><path d="M4.3 12.1L15.8 4.6L27.3 12.1L15.8 19.6Z" fill="url(#gb2)"/></g><path d="M15.8 4.6 L13 19 L9 17 Z" fill="#d3e7fa" opacity=".5"/><g stroke="#0c1322" stroke-width="1.6" stroke-linejoin="round" paint-order="stroke" filter="url(#sh)"><path d="M0 0 L0 12.2 L3 9.6 L5.6 14.8 L7.8 13.7 L5.3 8.6 L9.3 8.3 Z" fill="url(#gcur)" transform="translate(18.6,16.6) rotate(-14) scale(1)"/></g></svg><svg class="ic" style="left:52px;top:6px" width="32" height="32" viewBox="0 0 32 32"><g stroke="#0c1322" stroke-width="1.7" stroke-linejoin="round" paint-order="stroke" filter="url(#sh)"><path d="M4.3 21.3L15.8 14.9L27.3 21.3L15.8 27.7Z" fill="#f0f0ee"/><path d="M4.3 17.3L15.8 10.9L27.3 17.3L15.8 23.7Z" fill="#f0f0ee"/><path d="M4.3 13.3L15.8 6.9L27.3 13.3L15.8 19.7Z" fill="url(#gb2)"/></g><g stroke="#0c1322" stroke-width="1.7" stroke-linejoin="round" paint-order="stroke" filter="url(#sh)"><g transform="rotate(45 16 6.8)"><path d="M14.4 1.6h3.2v3.6h3.6v3.2h-3.6v3.6h-3.2v-3.6h-3.6v-3.2h3.6z" fill="#fff"/></g></g><g stroke="#0c1322" stroke-width="1.6" stroke-linejoin="round" paint-order="stroke" filter="url(#sh)"><path d="M0 0 L0 12.2 L3 9.6 L5.6 14.8 L7.8 13.7 L5.3 8.6 L9.3 8.3 Z" fill="url(#gcur)" transform="translate(18.6,16.6) rotate(-14) scale(1)"/></g></svg><svg class="ic" style="left:89px;top:6px" width="32" height="32" viewBox="0 0 32 32"><g fill="none" stroke="#c3c9d2" stroke-width="1.3" filter="url(#sh)"><path d="M7 13.9v-5.6q0 -1.6 1.6 -1.6h5.6"/><path d="M25.5 13.9v-5.6q0 -1.6 -1.6 -1.6h-5.6"/><path d="M7 18v5.6q0 1.6 1.6 1.6h5.6"/><path d="M25.5 18v5.6q0 1.6 -1.6 1.6h-5.6"/></g><circle cx="13.4" cy="12.2" r="3.6" fill="url(#br)"/><circle cx="18.8" cy="12" r="3.2" fill="url(#br)"/><circle cx="12.4" cy="18.6" r="4.2" fill="url(#br)"/><circle cx="17" cy="17" r="4" fill="url(#br)"/><g stroke="#0c1322" stroke-width="1.7" stroke-linejoin="round" paint-order="stroke" filter="url(#sh)"><path d="M19.5 15h3.4v4.5h4.5v3.4h-4.5v4.5h-3.4v-4.5h-4.5v-3.4h4.5z" fill="#fff"/></g></svg><svg class="ic" style="left:126px;top:6px" width="32" height="32" viewBox="0 0 32 32"><g fill="none" stroke="#c3c9d2" stroke-width="1.3" filter="url(#sh)"><path d="M6.8 14.2v-5.6q0 -1.6 1.6 -1.6h5.6"/><path d="M25.3 14.2v-5.6q0 -1.6 -1.6 -1.6h-5.6"/><path d="M6.8 18v5.6q0 1.6 1.6 1.6h5.6"/><path d="M25.3 18v5.6q0 1.6 -1.6 1.6h-5.6"/></g><path d="M16.8 8.6 Q20.6 8.8 20.4 12.6 Q20 15 17.6 16.6 Q17 20 15.2 21.8 Q12 23.8 9 21.4 Q7 18.6 9.4 16 Q12.6 14.4 13.2 11.4 Q14 8.6 16.8 8.6Z" fill="#2b8fda" stroke="#f4f8fc" stroke-width="1.3" filter="url(#sh)"/><path d="M15 11 Q15.4 9.8 17 10" stroke="#8fd0ff" stroke-width="1" fill="none"/><g stroke="#0c1322" stroke-width="1.7" stroke-linejoin="round" paint-order="stroke" filter="url(#sh)"><path d="M19.3 15h3.4v4.5h4.5v3.4h-4.5v4.5h-3.4v-4.5h-4.5v-3.4h4.5z" fill="#fff"/></g></svg><svg class="ic" style="left:169px;top:6px" width="32" height="32" viewBox="0 0 32 32"><g filter="url(#sh)"><path d="M17.99 18.30 L17.99 20.90 L16.25 20.95 L15.92 21.95 L17.30 23.01 L15.78 25.11 L14.34 24.13 L13.49 24.75 L13.98 26.42 L11.51 27.22 L10.93 25.58 L9.87 25.58 L9.29 27.22 L6.82 26.42 L7.31 24.75 L6.46 24.13 L5.02 25.11 L3.50 23.01 L4.88 21.95 L4.55 20.95 L2.81 20.90 L2.81 18.30 L4.55 18.25 L4.88 17.25 L3.50 16.19 L5.02 14.09 L6.46 15.07 L7.31 14.45 L6.82 12.78 L9.29 11.98 L9.87 13.62 L10.93 13.62 L11.51 11.98 L13.98 12.78 L13.49 14.45 L14.34 15.07 L15.78 14.09 L17.30 16.19 L15.92 17.25 L16.25 18.25 Z" fill="url(#gw)" stroke="#1a2233" stroke-width="0.7" stroke-linejoin="round"/><circle cx="10.4" cy="19.6" r="3.8" fill="none" stroke="#6f93bf" stroke-width="1.4"/><circle cx="10.4" cy="19.6" r="1.5" fill="#1c2638"/><path d="M24.02 8.45 L24.02 10.35 L22.69 10.36 L22.46 11.08 L23.52 11.88 L22.41 13.41 L21.32 12.64 L20.71 13.09 L21.10 14.36 L19.31 14.94 L18.88 13.68 L18.12 13.68 L17.69 14.94 L15.90 14.36 L16.29 13.09 L15.68 12.64 L14.59 13.41 L13.48 11.88 L14.54 11.08 L14.31 10.36 L12.98 10.35 L12.98 8.45 L14.31 8.44 L14.54 7.72 L13.48 6.92 L14.59 5.39 L15.68 6.16 L16.29 5.71 L15.90 4.44 L17.69 3.86 L18.12 5.12 L18.88 5.12 L19.31 3.86 L21.10 4.44 L20.71 5.71 L21.32 6.16 L22.41 5.39 L23.52 6.92 L22.46 7.72 L22.69 8.44 Z" fill="url(#gw)" stroke="#1a2233" stroke-width="0.7" stroke-linejoin="round"/><circle cx="18.5" cy="9.4" r="2.6" fill="none" stroke="#6f93bf" stroke-width="1"/><circle cx="18.5" cy="9.4" r="1" fill="#1c2638"/></g><path d="M20.8 -0.8 L32.2 -0.8 L26.5 8 Z" fill="url(#gtri)"/></svg><div class="sep" style="left:163px;top:4px;height:37px"></div></div>
<div class="tb" style="left:211px;top:73px;width:206px;height:44px"><div class="hd" style="left:4px;top:5px;height:34px"></div><div class="sel" style="left:13px;top:4px"></div><svg class="ic" style="left:15px;top:6px" width="32" height="32" viewBox="0 0 32 32"><g stroke="#0c1322" stroke-width="1.7" stroke-linejoin="round" paint-order="stroke" filter="url(#sh)"><path d="M2.4 14.9 H29.6 L28.9 22.6 Q23 23.4 18.7 23 L17.7 18.6 H14.3 L13.3 23 Q9 23.4 3.1 22.6 Z" fill="#9fcaf2"/></g><path d="M4.5 16 H12.4 L11.8 20.9 Q8 21.5 4.9 20.9 Z" fill="#4c6583" stroke="#1b2a42" stroke-width="0.5"/><path d="M19.6 16 H27.5 L27.1 20.9 Q24 21.5 20.2 20.9 Z" fill="#4c6583" stroke="#1b2a42" stroke-width="0.5"/><g stroke="#0c1322" stroke-width="1.7" stroke-linejoin="round" paint-order="stroke" filter="url(#sh)"><g transform="rotate(45 15.9 6.4)"><path d="M14.2 0.8h3.4v3.9h3.9v3.4h-3.9v3.9h-3.4v-3.9h-3.9v-3.4h3.9z" fill="#fff"/></g></g></svg><svg class="ic" style="left:52px;top:6px" width="32" height="32" viewBox="0 0 32 32"><g stroke="#0c1322" stroke-width="1.7" stroke-linejoin="round" paint-order="stroke" filter="url(#sh)"><path d="M2.4 14.9 H29.6 L28.9 22.6 Q23 23.4 18.7 23 L17.7 18.6 H14.3 L13.3 23 Q9 23.4 3.1 22.6 Z" fill="#9fcaf2"/></g><path d="M4.5 16 H12.4 L11.8 20.9 Q8 21.5 4.9 20.9 Z" fill="#7fa4cf" stroke="#1b2a42" stroke-width="0.5"/><path d="M19.6 16 H27.5 L27.1 20.9 Q24 21.5 20.2 20.9 Z" fill="#22344a" stroke="#1b2a42" stroke-width="0.5"/></svg><svg class="ic" style="left:89px;top:6px" width="32" height="32" viewBox="0 0 32 32"><g stroke="#0c1322" stroke-width="1.7" stroke-linejoin="round" paint-order="stroke" filter="url(#sh)"><path d="M2.4 14.9 H29.6 L28.9 22.6 Q23 23.4 18.7 23 L17.7 18.6 H14.3 L13.3 23 Q9 23.4 3.1 22.6 Z" fill="#9fcaf2"/></g><path d="M4.5 16 H12.4 L11.8 20.9 Q8 21.5 4.9 20.9 Z" fill="#4c6583" stroke="#1b2a42" stroke-width="0.5"/><path d="M19.6 16 H27.5 L27.1 20.9 Q24 21.5 20.2 20.9 Z" fill="#4c6583" stroke="#1b2a42" stroke-width="0.5"/><g fill="none" stroke="#fff" stroke-width="1.5" stroke-linecap="round" filter="url(#sh)"><circle cx="12.4" cy="6.2" r="0.6" fill="#fff"/><path d="M14.6 3.6 Q16.2 6.2 14.6 8.8"/><path d="M17.2 1.6 Q20.4 6.2 17.2 10.8"/></g></svg><svg class="ic" style="left:126px;top:6px" width="32" height="32" viewBox="0 0 32 32"><g stroke="#0c1322" stroke-width="1.7" stroke-linejoin="round" paint-order="stroke" filter="url(#sh)"><path d="M2.4 14.9 H29.6 L28.9 22.6 Q23 23.4 18.7 23 L17.7 18.6 H14.3 L13.3 23 Q9 23.4 3.1 22.6 Z" fill="#9fcaf2"/></g><path d="M4.5 16 H12.4 L11.8 20.9 Q8 21.5 4.9 20.9 Z" fill="#4c6583" stroke="#1b2a42" stroke-width="0.5"/><path d="M19.6 16 H27.5 L27.1 20.9 Q24 21.5 20.2 20.9 Z" fill="#4c6583" stroke="#1b2a42" stroke-width="0.5"/><g filter="url(#sh)"><path d="M8 8 Q15.8 -1.6 23.6 8" fill="none" stroke="#fff" stroke-width="1.7"/><path d="M5.6 5.6 L6 11.4 L11.2 9.4 Z M26 5.6 L25.6 11.4 L20.4 9.4 Z" fill="#fff"/></g></svg><svg class="ic" style="left:169px;top:6px" width="32" height="32" viewBox="0 0 32 32"><g filter="url(#sh)"><path d="M17.99 18.30 L17.99 20.90 L16.25 20.95 L15.92 21.95 L17.30 23.01 L15.78 25.11 L14.34 24.13 L13.49 24.75 L13.98 26.42 L11.51 27.22 L10.93 25.58 L9.87 25.58 L9.29 27.22 L6.82 26.42 L7.31 24.75 L6.46 24.13 L5.02 25.11 L3.50 23.01 L4.88 21.95 L4.55 20.95 L2.81 20.90 L2.81 18.30 L4.55 18.25 L4.88 17.25 L3.50 16.19 L5.02 14.09 L6.46 15.07 L7.31 14.45 L6.82 12.78 L9.29 11.98 L9.87 13.62 L10.93 13.62 L11.51 11.98 L13.98 12.78 L13.49 14.45 L14.34 15.07 L15.78 14.09 L17.30 16.19 L15.92 17.25 L16.25 18.25 Z" fill="url(#gw)" stroke="#1a2233" stroke-width="0.7" stroke-linejoin="round"/><circle cx="10.4" cy="19.6" r="3.8" fill="none" stroke="#6f93bf" stroke-width="1.4"/><circle cx="10.4" cy="19.6" r="1.5" fill="#1c2638"/><path d="M24.02 8.45 L24.02 10.35 L22.69 10.36 L22.46 11.08 L23.52 11.88 L22.41 13.41 L21.32 12.64 L20.71 13.09 L21.10 14.36 L19.31 14.94 L18.88 13.68 L18.12 13.68 L17.69 14.94 L15.90 14.36 L16.29 13.09 L15.68 12.64 L14.59 13.41 L13.48 11.88 L14.54 11.08 L14.31 10.36 L12.98 10.35 L12.98 8.45 L14.31 8.44 L14.54 7.72 L13.48 6.92 L14.59 5.39 L15.68 6.16 L16.29 5.71 L15.90 4.44 L17.69 3.86 L18.12 5.12 L18.88 5.12 L19.31 3.86 L21.10 4.44 L20.71 5.71 L21.32 6.16 L22.41 5.39 L23.52 6.92 L22.46 7.72 L22.69 8.44 Z" fill="url(#gw)" stroke="#1a2233" stroke-width="0.7" stroke-linejoin="round"/><circle cx="18.5" cy="9.4" r="2.6" fill="none" stroke="#6f93bf" stroke-width="1"/><circle cx="18.5" cy="9.4" r="1" fill="#1c2638"/></g><path d="M20.8 -0.8 L32.2 -0.8 L26.5 8 Z" fill="url(#gtri)"/></svg><div class="sep" style="left:163px;top:4px;height:37px"></div></div>
<div class="tb" style="left:420px;top:73px;width:251px;height:44px"><div class="hd" style="left:4px;top:5px;height:34px"></div><div class="sel" style="left:13px;top:4px"></div><div class="sel" style="left:169px;top:4px"></div><svg class="ic" style="left:15px;top:6px" width="32" height="32" viewBox="0 0 32 32"><g filter="url(#sh)"><circle cx="3.9" cy="3.8" r="2.9" fill="url(#bbd)" stroke="#0c1322" stroke-width="0.9"/><ellipse cx="3.9" cy="2.35" rx="1.682" ry="0.87" fill="#fff" opacity=".55"/><circle cx="26.9" cy="5.2" r="3.9" fill="url(#bbd)" stroke="#0c1322" stroke-width="0.9"/><ellipse cx="26.9" cy="3.25" rx="2.262" ry="1.17" fill="#fff" opacity=".55"/><circle cx="11.6" cy="15" r="6" fill="url(#bb)" stroke="#0c1322" stroke-width="0.9"/><ellipse cx="11.6" cy="12" rx="3.48" ry="1.8" fill="#fff" opacity=".55"/><circle cx="22" cy="25.6" r="4.7" fill="url(#bb)" stroke="#0c1322" stroke-width="0.9"/><ellipse cx="22" cy="23.25" rx="2.726" ry="1.41" fill="#fff" opacity=".55"/><path d="M4.8 5.6L8.6 11" stroke="#0c1322" stroke-width="4"/><path d="M4.8 5.6L8.6 11" stroke="#a9cdf0" stroke-width="2.5"/><path d="M16.6 11.6L24.4 6.8" stroke="#0c1322" stroke-width="4"/><path d="M16.6 11.6L24.4 6.8" stroke="#a9cdf0" stroke-width="2.5"/><path d="M14.4 18.6L19.6 23.2" stroke="#0c1322" stroke-width="4"/><path d="M14.4 18.6L19.6 23.2" stroke="#a9cdf0" stroke-width="2.5"/></g></svg><svg class="ic" style="left:52px;top:6px" width="32" height="32" viewBox="0 0 32 32"><g filter="url(#sh)"><circle cx="3.9" cy="4" r="2.9" fill="url(#bbd)" stroke="#0c1322" stroke-width="0.9"/><ellipse cx="3.9" cy="2.55" rx="1.682" ry="0.87" fill="#fff" opacity=".55"/><circle cx="26.8" cy="5.2" r="3.9" fill="url(#bbd)" stroke="#0c1322" stroke-width="0.9"/><ellipse cx="26.8" cy="3.25" rx="2.262" ry="1.17" fill="#fff" opacity=".55"/><circle cx="11.1" cy="15.3" r="6" fill="url(#bb)" stroke="#0c1322" stroke-width="0.9"/><ellipse cx="11.1" cy="12.3" rx="3.48" ry="1.8" fill="#fff" opacity=".55"/><circle cx="22" cy="25.6" r="4.7" fill="url(#bb)" stroke="#0c1322" stroke-width="0.9"/><ellipse cx="22" cy="23.25" rx="2.726" ry="1.41" fill="#fff" opacity=".55"/></g></svg><svg class="ic" style="left:89px;top:6px" width="32" height="32" viewBox="0 0 32 32"><g fill="none" filter="url(#sh)"><path d="M3.8 4 L12.9 18.7 L24.4 28 M12.9 18.7 L28.8 6.8" stroke="#0c1322" stroke-width="2.8"/><path d="M3.8 4 L12.9 18.7 L24.4 28 M12.9 18.7 L28.8 6.8" stroke="#a9cdf0" stroke-width="1.4"/></g></svg><svg class="ic" style="left:129px;top:6px" width="32" height="32" viewBox="0 0 32 32"><g filter="url(#sh)"><circle cx="7.9" cy="5.9" r="5" fill="url(#bb)" stroke="#0c1322" stroke-width="0.9"/><ellipse cx="7.9" cy="3.4" rx="2.9" ry="1.5" fill="#fff" opacity=".55"/><circle cx="23.5" cy="9" r="5.3" fill="url(#bbd)" stroke="#0c1322" stroke-width="0.9"/><ellipse cx="23.5" cy="6.35" rx="3.074" ry="1.59" fill="#fff" opacity=".55"/><circle cx="21.3" cy="24.6" r="5.5" fill="url(#bb)" stroke="#0c1322" stroke-width="0.9"/><ellipse cx="21.3" cy="21.85" rx="3.19" ry="1.65" fill="#fff" opacity=".55"/><circle cx="12.9" cy="15.3" r="6.2" fill="url(#bb)" stroke="#0c1322" stroke-width="0.9"/><ellipse cx="12.9" cy="12.2" rx="3.596" ry="1.86" fill="#fff" opacity=".55"/></g></svg><svg class="ic" style="left:171px;top:6px" width="32" height="32" viewBox="0 0 32 32"><g stroke="#0c1322" stroke-width="1.7" stroke-linejoin="round" paint-order="stroke" filter="url(#sh)"><rect x="4.4" y="5.7" width="24" height="21.6" rx="1.8" fill="url(#gsq)"/></g></svg><svg class="ic" style="left:214px;top:6px" width="32" height="32" viewBox="0 0 32 32"><g filter="url(#sh)"><path d="M17.99 18.30 L17.99 20.90 L16.25 20.95 L15.92 21.95 L17.30 23.01 L15.78 25.11 L14.34 24.13 L13.49 24.75 L13.98 26.42 L11.51 27.22 L10.93 25.58 L9.87 25.58 L9.29 27.22 L6.82 26.42 L7.31 24.75 L6.46 24.13 L5.02 25.11 L3.50 23.01 L4.88 21.95 L4.55 20.95 L2.81 20.90 L2.81 18.30 L4.55 18.25 L4.88 17.25 L3.50 16.19 L5.02 14.09 L6.46 15.07 L7.31 14.45 L6.82 12.78 L9.29 11.98 L9.87 13.62 L10.93 13.62 L11.51 11.98 L13.98 12.78 L13.49 14.45 L14.34 15.07 L15.78 14.09 L17.30 16.19 L15.92 17.25 L16.25 18.25 Z" fill="url(#gw)" stroke="#1a2233" stroke-width="0.7" stroke-linejoin="round"/><circle cx="10.4" cy="19.6" r="3.8" fill="none" stroke="#6f93bf" stroke-width="1.4"/><circle cx="10.4" cy="19.6" r="1.5" fill="#1c2638"/><path d="M24.02 8.45 L24.02 10.35 L22.69 10.36 L22.46 11.08 L23.52 11.88 L22.41 13.41 L21.32 12.64 L20.71 13.09 L21.10 14.36 L19.31 14.94 L18.88 13.68 L18.12 13.68 L17.69 14.94 L15.90 14.36 L16.29 13.09 L15.68 12.64 L14.59 13.41 L13.48 11.88 L14.54 11.08 L14.31 10.36 L12.98 10.35 L12.98 8.45 L14.31 8.44 L14.54 7.72 L13.48 6.92 L14.59 5.39 L15.68 6.16 L16.29 5.71 L15.90 4.44 L17.69 3.86 L18.12 5.12 L18.88 5.12 L19.31 3.86 L21.10 4.44 L20.71 5.71 L21.32 6.16 L22.41 5.39 L23.52 6.92 L22.46 7.72 L22.69 8.44 Z" fill="url(#gw)" stroke="#1a2233" stroke-width="0.7" stroke-linejoin="round"/><circle cx="18.5" cy="9.4" r="2.6" fill="none" stroke="#6f93bf" stroke-width="1"/><circle cx="18.5" cy="9.4" r="1" fill="#1c2638"/></g><path d="M20.8 -0.8 L32.2 -0.8 L26.5 8 Z" fill="url(#gtri)"/></svg><div class="sep" style="left:126px;top:4px;height:37px"></div><div class="sep" style="left:167px;top:4px;height:37px"></div><div class="sep" style="left:208px;top:4px;height:37px"></div></div>
<div class="tb" style="left:674px;top:73px;width:1244px;height:44px"><div class="hd" style="left:4px;top:5px;height:34px"></div><div class="sel" style="left:50px;top:4px"></div><svg class="ic" style="left:15px;top:6px" width="32" height="32" viewBox="0 0 32 32"><g stroke="#0c1322" stroke-width="1.7" stroke-linejoin="round" paint-order="stroke" filter="url(#sh)"><circle cx="16" cy="15.6" r="9" fill="url(#gb)"/></g><path d="M12 10.6 L12 20.6 L21.6 15.6 Z" fill="#7bc142" stroke="#3d7a1e" stroke-width="0.7" stroke-linejoin="round"/></svg><svg class="ic" style="left:52px;top:6px" width="32" height="32" viewBox="0 0 32 32"><g stroke="#0c1322" stroke-width="1.7" stroke-linejoin="round" paint-order="stroke" filter="url(#sh)"><circle cx="15.9" cy="15.6" r="9" fill="url(#gb)"/></g><rect x="11.2" y="10.9" width="9.4" height="9.4" rx="1" fill="#d24b4b" stroke="#7a2020" stroke-width="0.7"/></svg><svg class="ic" style="left:95px;top:6px" width="32" height="32" viewBox="0 0 32 32"><g filter="url(#sh)"><path d="M17.99 18.30 L17.99 20.90 L16.25 20.95 L15.92 21.95 L17.30 23.01 L15.78 25.11 L14.34 24.13 L13.49 24.75 L13.98 26.42 L11.51 27.22 L10.93 25.58 L9.87 25.58 L9.29 27.22 L6.82 26.42 L7.31 24.75 L6.46 24.13 L5.02 25.11 L3.50 23.01 L4.88 21.95 L4.55 20.95 L2.81 20.90 L2.81 18.30 L4.55 18.25 L4.88 17.25 L3.50 16.19 L5.02 14.09 L6.46 15.07 L7.31 14.45 L6.82 12.78 L9.29 11.98 L9.87 13.62 L10.93 13.62 L11.51 11.98 L13.98 12.78 L13.49 14.45 L14.34 15.07 L15.78 14.09 L17.30 16.19 L15.92 17.25 L16.25 18.25 Z" fill="url(#gw)" stroke="#1a2233" stroke-width="0.7" stroke-linejoin="round"/><circle cx="10.4" cy="19.6" r="3.8" fill="none" stroke="#6f93bf" stroke-width="1.4"/><circle cx="10.4" cy="19.6" r="1.5" fill="#1c2638"/><path d="M24.02 8.45 L24.02 10.35 L22.69 10.36 L22.46 11.08 L23.52 11.88 L22.41 13.41 L21.32 12.64 L20.71 13.09 L21.10 14.36 L19.31 14.94 L18.88 13.68 L18.12 13.68 L17.69 14.94 L15.90 14.36 L16.29 13.09 L15.68 12.64 L14.59 13.41 L13.48 11.88 L14.54 11.08 L14.31 10.36 L12.98 10.35 L12.98 8.45 L14.31 8.44 L14.54 7.72 L13.48 6.92 L14.59 5.39 L15.68 6.16 L16.29 5.71 L15.90 4.44 L17.69 3.86 L18.12 5.12 L18.88 5.12 L19.31 3.86 L21.10 4.44 L20.71 5.71 L21.32 6.16 L22.41 5.39 L23.52 6.92 L22.46 7.72 L22.69 8.44 Z" fill="url(#gw)" stroke="#1a2233" stroke-width="0.7" stroke-linejoin="round"/><circle cx="18.5" cy="9.4" r="2.6" fill="none" stroke="#6f93bf" stroke-width="1"/><circle cx="18.5" cy="9.4" r="1" fill="#1c2638"/></g><path d="M20.8 -0.8 L32.2 -0.8 L26.5 8 Z" fill="url(#gtri)"/></svg><div class="sep" style="left:89px;top:4px;height:37px"></div></div>
<div class="tb" style="left:2px;top:120px;width:43px;height:576px"><div class="hdh" style="left:4px;top:5px;width:34px"></div><div class="sel" style="left:3px;top:14px"></div><svg class="ic" style="left:5px;top:16px" width="32" height="32" viewBox="0 0 32 32"><clipPath id="cg"><rect width="32" height="32"/></clipPath><rect width="32" height="32" fill="#fff"/><g clip-path="url(#cg)"><path d="M4.9 1.5L2.1 6.4M2.1 6.4L-3.3 6.4M-3.3 6.4L-6.0 1.5M4.9 11.4L2.1 16.3M2.1 16.3L-3.3 16.3M-3.3 16.3L-6.0 11.4M4.9 21.2L2.1 26.2M2.1 26.2L-3.3 26.2M-3.3 26.2L-6.0 21.2M4.9 31.2L2.1 36.1M2.1 36.1L-3.3 36.1M-3.3 36.1L-6.0 31.2M4.9 41.1L2.1 46.0M2.1 46.0L-3.3 46.0M-3.3 46.0L-6.0 41.1M4.9 51.0L2.1 55.9M2.1 55.9L-3.3 55.9M-3.3 55.9L-6.0 51.0M4.9 60.9L2.1 65.8M2.1 65.8L-3.3 65.8M-3.3 65.8L-6.0 60.9M13.1 -3.5L10.3 1.5M10.3 1.5L4.9 1.5M4.9 1.5L2.1 -3.5M13.1 6.4L10.3 11.4M10.3 11.4L4.9 11.4M4.9 11.4L2.1 6.4M13.1 16.3L10.3 21.2M10.3 21.2L4.9 21.2M4.9 21.2L2.1 16.3M13.1 26.2L10.3 31.2M10.3 31.2L4.9 31.2M4.9 31.2L2.1 26.2M13.1 36.1L10.3 41.1M10.3 41.1L4.9 41.1M4.9 41.1L2.1 36.1M13.1 46.0L10.3 51.0M10.3 51.0L4.9 51.0M4.9 51.0L2.1 46.0M13.1 55.9L10.3 60.9M10.3 60.9L4.9 60.9M4.9 60.9L2.1 55.9M21.2 1.5L18.5 6.4M18.5 6.4L13.1 6.4M13.1 6.4L10.3 1.5M21.2 11.4L18.5 16.3M18.5 16.3L13.1 16.3M13.1 16.3L10.3 11.4M21.2 21.2L18.5 26.2M18.5 26.2L13.1 26.2M13.1 26.2L10.3 21.2M21.2 31.2L18.5 36.1M18.5 36.1L13.1 36.1M13.1 36.1L10.3 31.2M21.2 41.1L18.5 46.0M18.5 46.0L13.1 46.0M13.1 46.0L10.3 41.1M21.2 51.0L18.5 55.9M18.5 55.9L13.1 55.9M13.1 55.9L10.3 51.0M21.2 60.9L18.5 65.8M18.5 65.8L13.1 65.8M13.1 65.8L10.3 60.9M29.4 -3.5L26.7 1.5M26.7 1.5L21.2 1.5M21.2 1.5L18.5 -3.5M29.4 6.4L26.7 11.4M26.7 11.4L21.2 11.4M21.2 11.4L18.5 6.4M29.4 16.3L26.7 21.2M26.7 21.2L21.2 21.2M21.2 21.2L18.5 16.3M29.4 26.2L26.7 31.2M26.7 31.2L21.2 31.2M21.2 31.2L18.5 26.2M29.4 36.1L26.7 41.1M26.7 41.1L21.2 41.1M21.2 41.1L18.5 36.1M29.4 46.0L26.7 51.0M26.7 51.0L21.2 51.0M21.2 51.0L18.5 46.0M29.4 55.9L26.7 60.9M26.7 60.9L21.2 60.9M21.2 60.9L18.5 55.9M37.6 1.5L34.9 6.4M34.9 6.4L29.4 6.4M29.4 6.4L26.7 1.5M37.6 11.4L34.9 16.3M34.9 16.3L29.4 16.3M29.4 16.3L26.7 11.4M37.6 21.2L34.9 26.2M34.9 26.2L29.4 26.2M29.4 26.2L26.7 21.2M37.6 31.2L34.9 36.1M34.9 36.1L29.4 36.1M29.4 36.1L26.7 31.2M37.6 41.1L34.9 46.0M34.9 46.0L29.4 46.0M29.4 46.0L26.7 41.1M37.6 51.0L34.9 55.9M34.9 55.9L29.4 55.9M29.4 55.9L26.7 51.0M37.6 60.9L34.9 65.8M34.9 65.8L29.4 65.8M29.4 65.8L26.7 60.9M45.8 -3.5L43.0 1.5M43.0 1.5L37.6 1.5M37.6 1.5L34.9 -3.5M45.8 6.4L43.0 11.4M43.0 11.4L37.6 11.4M37.6 11.4L34.9 6.4M45.8 16.3L43.0 21.2M43.0 21.2L37.6 21.2M37.6 21.2L34.9 16.3M45.8 26.2L43.0 31.2M43.0 31.2L37.6 31.2M37.6 31.2L34.9 26.2M45.8 36.1L43.0 41.1M43.0 41.1L37.6 41.1M37.6 41.1L34.9 36.1M45.8 46.0L43.0 51.0M43.0 51.0L37.6 51.0M37.6 51.0L34.9 46.0M45.8 55.9L43.0 60.9M43.0 60.9L37.6 60.9M37.6 60.9L34.9 55.9M53.9 1.5L51.2 6.4M51.2 6.4L45.8 6.4M45.8 6.4L43.0 1.5M53.9 11.4L51.2 16.3M51.2 16.3L45.8 16.3M45.8 16.3L43.0 11.4M53.9 21.2L51.2 26.2M51.2 26.2L45.8 26.2M45.8 26.2L43.0 21.2M53.9 31.2L51.2 36.1M51.2 36.1L45.8 36.1M45.8 36.1L43.0 31.2M53.9 41.1L51.2 46.0M51.2 46.0L45.8 46.0M45.8 46.0L43.0 41.1M53.9 51.0L51.2 55.9M51.2 55.9L45.8 55.9M45.8 55.9L43.0 51.0M53.9 60.9L51.2 65.8M51.2 65.8L45.8 65.8M45.8 65.8L43.0 60.9" stroke="#9a9a9a" stroke-width="1" fill="none"/><g fill="#6c6c6c"><circle cx="2.1" cy="6.4" r="0.95"/><circle cx="2.1" cy="16.3" r="0.95"/><circle cx="2.1" cy="26.2" r="0.95"/><circle cx="4.9" cy="1.5" r="0.95"/><circle cx="4.9" cy="11.4" r="0.95"/><circle cx="4.9" cy="21.2" r="0.95"/><circle cx="4.9" cy="31.2" r="0.95"/><circle cx="10.3" cy="1.5" r="0.95"/><circle cx="10.3" cy="11.4" r="0.95"/><circle cx="10.3" cy="21.2" r="0.95"/><circle cx="10.3" cy="31.2" r="0.95"/><circle cx="13.1" cy="6.4" r="0.95"/><circle cx="13.1" cy="16.3" r="0.95"/><circle cx="13.1" cy="26.2" r="0.95"/><circle cx="18.5" cy="6.4" r="0.95"/><circle cx="18.5" cy="16.3" r="0.95"/><circle cx="18.5" cy="26.2" r="0.95"/><circle cx="21.2" cy="1.5" r="0.95"/><circle cx="21.2" cy="11.4" r="0.95"/><circle cx="21.2" cy="21.2" r="0.95"/><circle cx="21.2" cy="31.2" r="0.95"/><circle cx="26.7" cy="1.5" r="0.95"/><circle cx="26.7" cy="11.4" r="0.95"/><circle cx="26.7" cy="21.2" r="0.95"/><circle cx="26.7" cy="31.2" r="0.95"/><circle cx="29.4" cy="6.4" r="0.95"/><circle cx="29.4" cy="16.3" r="0.95"/><circle cx="29.4" cy="26.2" r="0.95"/></g></g></svg><svg class="ic" style="left:5px;top:53px" width="32" height="32" viewBox="0 0 32 32"><rect x="1" y="2.2" width="4.4" height="8.3" fill="#a9c79a"/><rect x="1" y="11.7" width="4.3" height="8.3" fill="#f3b431"/><rect x="1" y="21" width="4.3" height="8.7" fill="#f3b431"/><rect x="6.4" y="11.7" width="4.8" height="8.3" fill="#ece86a"/><rect x="6.4" y="21" width="4.8" height="8.7" fill="#ece86a"/><rect x="12.2" y="2.2" width="19" height="27.5" fill="#eeeade"/><text x="13.6" y="16.6" font-family="Liberation Sans" font-weight="bold" font-size="4.6" fill="#444">H</text><path d="M13.6 22.6h6.6M13.6 27.4h5" stroke="#9a978c" stroke-width="0.9"/><path d="M2.4 6.4h1.6M2 15.8h2.4M2 25.4h2.4M7.6 15.8h2.4M7.6 25.4h2.4" stroke="#c0884a" stroke-width="0.7" opacity=".7"/></svg><svg class="ic" style="left:5px;top:90px" width="32" height="32" viewBox="0 0 32 32"><clipPath id="cn"><rect x="2" y="9.4" width="28" height="14.4"/></clipPath><rect width="32" height="32" fill="url(#gview)"/><g clip-path="url(#cn)" opacity=".75"><path d="M1.1 8.1L0.2 9.6M0.2 9.6L-1.5 9.6M-1.5 9.6L-2.4 8.1M1.1 11.1L0.2 12.6M0.2 12.6L-1.5 12.6M-1.5 12.6L-2.4 11.1M1.1 14.1L0.2 15.7M0.2 15.7L-1.5 15.7M-1.5 15.7L-2.4 14.1M1.1 17.2L0.2 18.7M0.2 18.7L-1.5 18.7M-1.5 18.7L-2.4 17.2M1.1 20.2L0.2 21.7M0.2 21.7L-1.5 21.7M-1.5 21.7L-2.4 20.2M1.1 23.2L0.2 24.8M0.2 24.8L-1.5 24.8M-1.5 24.8L-2.4 23.2M1.1 26.3L0.2 27.8M0.2 27.8L-1.5 27.8M-1.5 27.8L-2.4 26.3M1.1 29.3L0.2 30.8M0.2 30.8L-1.5 30.8M-1.5 30.8L-2.4 29.3M1.1 32.3L0.2 33.8M0.2 33.8L-1.5 33.8M-1.5 33.8L-2.4 32.3M1.1 35.4L0.2 36.9M0.2 36.9L-1.5 36.9M-1.5 36.9L-2.4 35.4M1.1 38.4L0.2 39.9M0.2 39.9L-1.5 39.9M-1.5 39.9L-2.4 38.4M1.1 41.4L0.2 42.9M0.2 42.9L-1.5 42.9M-1.5 42.9L-2.4 41.4M1.1 44.5L0.2 46.0M0.2 46.0L-1.5 46.0M-1.5 46.0L-2.4 44.5M1.1 47.5L0.2 49.0M0.2 49.0L-1.5 49.0M-1.5 49.0L-2.4 47.5M3.8 6.6L2.9 8.1M2.9 8.1L1.1 8.1M1.1 8.1L0.2 6.6M3.8 9.6L2.9 11.1M2.9 11.1L1.1 11.1M1.1 11.1L0.2 9.6M3.8 12.6L2.9 14.1M2.9 14.1L1.1 14.1M1.1 14.1L0.2 12.6M3.8 15.7L2.9 17.2M2.9 17.2L1.1 17.2M1.1 17.2L0.2 15.7M3.8 18.7L2.9 20.2M2.9 20.2L1.1 20.2M1.1 20.2L0.2 18.7M3.8 21.7L2.9 23.2M2.9 23.2L1.1 23.2M1.1 23.2L0.2 21.7M3.8 24.8L2.9 26.3M2.9 26.3L1.1 26.3M1.1 26.3L0.2 24.8M3.8 27.8L2.9 29.3M2.9 29.3L1.1 29.3M1.1 29.3L0.2 27.8M3.8 30.8L2.9 32.3M2.9 32.3L1.1 32.3M1.1 32.3L0.2 30.8M3.8 33.8L2.9 35.4M2.9 35.4L1.1 35.4M1.1 35.4L0.2 33.8M3.8 36.9L2.9 38.4M2.9 38.4L1.1 38.4M1.1 38.4L0.2 36.9M3.8 39.9L2.9 41.4M2.9 41.4L1.1 41.4M1.1 41.4L0.2 39.9M3.8 42.9L2.9 44.5M2.9 44.5L1.1 44.5M1.1 44.5L0.2 42.9M3.8 46.0L2.9 47.5M2.9 47.5L1.1 47.5M1.1 47.5L0.2 46.0M6.4 8.1L5.5 9.6M5.5 9.6L3.8 9.6M3.8 9.6L2.9 8.1M6.4 11.1L5.5 12.6M5.5 12.6L3.8 12.6M3.8 12.6L2.9 11.1M6.4 14.1L5.5 15.7M5.5 15.7L3.8 15.7M3.8 15.7L2.9 14.1M6.4 17.2L5.5 18.7M5.5 18.7L3.8 18.7M3.8 18.7L2.9 17.2M6.4 20.2L5.5 21.7M5.5 21.7L3.8 21.7M3.8 21.7L2.9 20.2M6.4 23.2L5.5 24.8M5.5 24.8L3.8 24.8M3.8 24.8L2.9 23.2M6.4 26.3L5.5 27.8M5.5 27.8L3.8 27.8M3.8 27.8L2.9 26.3M6.4 29.3L5.5 30.8M5.5 30.8L3.8 30.8M3.8 30.8L2.9 29.3M6.4 32.3L5.5 33.8M5.5 33.8L3.8 33.8M3.8 33.8L2.9 32.3M6.4 35.4L5.5 36.9M5.5 36.9L3.8 36.9M3.8 36.9L2.9 35.4M6.4 38.4L5.5 39.9M5.5 39.9L3.8 39.9M3.8 39.9L2.9 38.4M6.4 41.4L5.5 42.9M5.5 42.9L3.8 42.9M3.8 42.9L2.9 41.4M6.4 44.5L5.5 46.0M5.5 46.0L3.8 46.0M3.8 46.0L2.9 44.5M6.4 47.5L5.5 49.0M5.5 49.0L3.8 49.0M3.8 49.0L2.9 47.5M9.0 6.6L8.1 8.1M8.1 8.1L6.4 8.1M6.4 8.1L5.5 6.6M9.0 9.6L8.1 11.1M8.1 11.1L6.4 11.1M6.4 11.1L5.5 9.6M9.0 12.6L8.1 14.1M8.1 14.1L6.4 14.1M6.4 14.1L5.5 12.6M9.0 15.7L8.1 17.2M8.1 17.2L6.4 17.2M6.4 17.2L5.5 15.7M9.0 18.7L8.1 20.2M8.1 20.2L6.4 20.2M6.4 20.2L5.5 18.7M9.0 21.7L8.1 23.2M8.1 23.2L6.4 23.2M6.4 23.2L5.5 21.7M9.0 24.8L8.1 26.3M8.1 26.3L6.4 26.3M6.4 26.3L5.5 24.8M9.0 27.8L8.1 29.3M8.1 29.3L6.4 29.3M6.4 29.3L5.5 27.8M9.0 30.8L8.1 32.3M8.1 32.3L6.4 32.3M6.4 32.3L5.5 30.8M9.0 33.8L8.1 35.4M8.1 35.4L6.4 35.4M6.4 35.4L5.5 33.8M9.0 36.9L8.1 38.4M8.1 38.4L6.4 38.4M6.4 38.4L5.5 36.9M9.0 39.9L8.1 41.4M8.1 41.4L6.4 41.4M6.4 41.4L5.5 39.9M9.0 42.9L8.1 44.5M8.1 44.5L6.4 44.5M6.4 44.5L5.5 42.9M9.0 46.0L8.1 47.5M8.1 47.5L6.4 47.5M6.4 47.5L5.5 46.0M11.6 8.1L10.8 9.6M10.8 9.6L9.0 9.6M9.0 9.6L8.1 8.1M11.6 11.1L10.8 12.6M10.8 12.6L9.0 12.6M9.0 12.6L8.1 11.1M11.6 14.1L10.8 15.7M10.8 15.7L9.0 15.7M9.0 15.7L8.1 14.1M11.6 17.2L10.8 18.7M10.8 18.7L9.0 18.7M9.0 18.7L8.1 17.2M11.6 20.2L10.8 21.7M10.8 21.7L9.0 21.7M9.0 21.7L8.1 20.2M11.6 23.2L10.8 24.8M10.8 24.8L9.0 24.8M9.0 24.8L8.1 23.2M11.6 26.3L10.8 27.8M10.8 27.8L9.0 27.8M9.0 27.8L8.1 26.3M11.6 29.3L10.8 30.8M10.8 30.8L9.0 30.8M9.0 30.8L8.1 29.3M11.6 32.3L10.8 33.8M10.8 33.8L9.0 33.8M9.0 33.8L8.1 32.3M11.6 35.4L10.8 36.9M10.8 36.9L9.0 36.9M9.0 36.9L8.1 35.4M11.6 38.4L10.8 39.9M10.8 39.9L9.0 39.9M9.0 39.9L8.1 38.4M11.6 41.4L10.8 42.9M10.8 42.9L9.0 42.9M9.0 42.9L8.1 41.4M11.6 44.5L10.8 46.0M10.8 46.0L9.0 46.0M9.0 46.0L8.1 44.5M11.6 47.5L10.8 49.0M10.8 49.0L9.0 49.0M9.0 49.0L8.1 47.5M14.2 6.6L13.4 8.1M13.4 8.1L11.6 8.1M11.6 8.1L10.8 6.6M14.2 9.6L13.4 11.1M13.4 11.1L11.6 11.1M11.6 11.1L10.8 9.6M14.2 12.6L13.4 14.1M13.4 14.1L11.6 14.1M11.6 14.1L10.8 12.6M14.2 15.7L13.4 17.2M13.4 17.2L11.6 17.2M11.6 17.2L10.8 15.7M14.2 18.7L13.4 20.2M13.4 20.2L11.6 20.2M11.6 20.2L10.8 18.7M14.2 21.7L13.4 23.2M13.4 23.2L11.6 23.2M11.6 23.2L10.8 21.7M14.2 24.8L13.4 26.3M13.4 26.3L11.6 26.3M11.6 26.3L10.8 24.8M14.2 27.8L13.4 29.3M13.4 29.3L11.6 29.3M11.6 29.3L10.8 27.8M14.2 30.8L13.4 32.3M13.4 32.3L11.6 32.3M11.6 32.3L10.8 30.8M14.2 33.8L13.4 35.4M13.4 35.4L11.6 35.4M11.6 35.4L10.8 33.8M14.2 36.9L13.4 38.4M13.4 38.4L11.6 38.4M11.6 38.4L10.8 36.9M14.2 39.9L13.4 41.4M13.4 41.4L11.6 41.4M11.6 41.4L10.8 39.9M14.2 42.9L13.4 44.5M13.4 44.5L11.6 44.5M11.6 44.5L10.8 42.9M14.2 46.0L13.4 47.5M13.4 47.5L11.6 47.5M11.6 47.5L10.8 46.0M16.9 8.1L16.0 9.6M16.0 9.6L14.2 9.6M14.2 9.6L13.4 8.1M16.9 11.1L16.0 12.6M16.0 12.6L14.2 12.6M14.2 12.6L13.4 11.1M16.9 14.1L16.0 15.7M16.0 15.7L14.2 15.7M14.2 15.7L13.4 14.1M16.9 17.2L16.0 18.7M16.0 18.7L14.2 18.7M14.2 18.7L13.4 17.2M16.9 20.2L16.0 21.7M16.0 21.7L14.2 21.7M14.2 21.7L13.4 20.2M16.9 23.2L16.0 24.8M16.0 24.8L14.2 24.8M14.2 24.8L13.4 23.2M16.9 26.3L16.0 27.8M16.0 27.8L14.2 27.8M14.2 27.8L13.4 26.3M16.9 29.3L16.0 30.8M16.0 30.8L14.2 30.8M14.2 30.8L13.4 29.3M16.9 32.3L16.0 33.8M16.0 33.8L14.2 33.8M14.2 33.8L13.4 32.3M16.9 35.4L16.0 36.9M16.0 36.9L14.2 36.9M14.2 36.9L13.4 35.4M16.9 38.4L16.0 39.9M16.0 39.9L14.2 39.9M14.2 39.9L13.4 38.4M16.9 41.4L16.0 42.9M16.0 42.9L14.2 42.9M14.2 42.9L13.4 41.4M16.9 44.5L16.0 46.0M16.0 46.0L14.2 46.0M14.2 46.0L13.4 44.5M16.9 47.5L16.0 49.0M16.0 49.0L14.2 49.0M14.2 49.0L13.4 47.5M19.5 6.6L18.6 8.1M18.6 8.1L16.9 8.1M16.9 8.1L16.0 6.6M19.5 9.6L18.6 11.1M18.6 11.1L16.9 11.1M16.9 11.1L16.0 9.6M19.5 12.6L18.6 14.1M18.6 14.1L16.9 14.1M16.9 14.1L16.0 12.6M19.5 15.7L18.6 17.2M18.6 17.2L16.9 17.2M16.9 17.2L16.0 15.7M19.5 18.7L18.6 20.2M18.6 20.2L16.9 20.2M16.9 20.2L16.0 18.7M19.5 21.7L18.6 23.2M18.6 23.2L16.9 23.2M16.9 23.2L16.0 21.7M19.5 24.8L18.6 26.3M18.6 26.3L16.9 26.3M16.9 26.3L16.0 24.8M19.5 27.8L18.6 29.3M18.6 29.3L16.9 29.3M16.9 29.3L16.0 27.8M19.5 30.8L18.6 32.3M18.6 32.3L16.9 32.3M16.9 32.3L16.0 30.8M19.5 33.8L18.6 35.4M18.6 35.4L16.9 35.4M16.9 35.4L16.0 33.8M19.5 36.9L18.6 38.4M18.6 38.4L16.9 38.4M16.9 38.4L16.0 36.9M19.5 39.9L18.6 41.4M18.6 41.4L16.9 41.4M16.9 41.4L16.0 39.9M19.5 42.9L18.6 44.5M18.6 44.5L16.9 44.5M16.9 44.5L16.0 42.9M19.5 46.0L18.6 47.5M18.6 47.5L16.9 47.5M16.9 47.5L16.0 46.0M22.1 8.1L21.2 9.6M21.2 9.6L19.5 9.6M19.5 9.6L18.6 8.1M22.1 11.1L21.2 12.6M21.2 12.6L19.5 12.6M19.5 12.6L18.6 11.1M22.1 14.1L21.2 15.7M21.2 15.7L19.5 15.7M19.5 15.7L18.6 14.1M22.1 17.2L21.2 18.7M21.2 18.7L19.5 18.7M19.5 18.7L18.6 17.2M22.1 20.2L21.2 21.7M21.2 21.7L19.5 21.7M19.5 21.7L18.6 20.2M22.1 23.2L21.2 24.8M21.2 24.8L19.5 24.8M19.5 24.8L18.6 23.2M22.1 26.3L21.2 27.8M21.2 27.8L19.5 27.8M19.5 27.8L18.6 26.3M22.1 29.3L21.2 30.8M21.2 30.8L19.5 30.8M19.5 30.8L18.6 29.3M22.1 32.3L21.2 33.8M21.2 33.8L19.5 33.8M19.5 33.8L18.6 32.3M22.1 35.4L21.2 36.9M21.2 36.9L19.5 36.9M19.5 36.9L18.6 35.4M22.1 38.4L21.2 39.9M21.2 39.9L19.5 39.9M19.5 39.9L18.6 38.4M22.1 41.4L21.2 42.9M21.2 42.9L19.5 42.9M19.5 42.9L18.6 41.4M22.1 44.5L21.2 46.0M21.2 46.0L19.5 46.0M19.5 46.0L18.6 44.5M22.1 47.5L21.2 49.0M21.2 49.0L19.5 49.0M19.5 49.0L18.6 47.5M24.8 6.6L23.9 8.1M23.9 8.1L22.1 8.1M22.1 8.1L21.2 6.6M24.8 9.6L23.9 11.1M23.9 11.1L22.1 11.1M22.1 11.1L21.2 9.6M24.8 12.6L23.9 14.1M23.9 14.1L22.1 14.1M22.1 14.1L21.2 12.6M24.8 15.7L23.9 17.2M23.9 17.2L22.1 17.2M22.1 17.2L21.2 15.7M24.8 18.7L23.9 20.2M23.9 20.2L22.1 20.2M22.1 20.2L21.2 18.7M24.8 21.7L23.9 23.2M23.9 23.2L22.1 23.2M22.1 23.2L21.2 21.7M24.8 24.8L23.9 26.3M23.9 26.3L22.1 26.3M22.1 26.3L21.2 24.8M24.8 27.8L23.9 29.3M23.9 29.3L22.1 29.3M22.1 29.3L21.2 27.8M24.8 30.8L23.9 32.3M23.9 32.3L22.1 32.3M22.1 32.3L21.2 30.8M24.8 33.8L23.9 35.4M23.9 35.4L22.1 35.4M22.1 35.4L21.2 33.8M24.8 36.9L23.9 38.4M23.9 38.4L22.1 38.4M22.1 38.4L21.2 36.9M24.8 39.9L23.9 41.4M23.9 41.4L22.1 41.4M22.1 41.4L21.2 39.9M24.8 42.9L23.9 44.5M23.9 44.5L22.1 44.5M22.1 44.5L21.2 42.9M24.8 46.0L23.9 47.5M23.9 47.5L22.1 47.5M22.1 47.5L21.2 46.0M27.4 8.1L26.5 9.6M26.5 9.6L24.8 9.6M24.8 9.6L23.9 8.1M27.4 11.1L26.5 12.6M26.5 12.6L24.8 12.6M24.8 12.6L23.9 11.1M27.4 14.1L26.5 15.7M26.5 15.7L24.8 15.7M24.8 15.7L23.9 14.1M27.4 17.2L26.5 18.7M26.5 18.7L24.8 18.7M24.8 18.7L23.9 17.2M27.4 20.2L26.5 21.7M26.5 21.7L24.8 21.7M24.8 21.7L23.9 20.2M27.4 23.2L26.5 24.8M26.5 24.8L24.8 24.8M24.8 24.8L23.9 23.2M27.4 26.3L26.5 27.8M26.5 27.8L24.8 27.8M24.8 27.8L23.9 26.3M27.4 29.3L26.5 30.8M26.5 30.8L24.8 30.8M24.8 30.8L23.9 29.3M27.4 32.3L26.5 33.8M26.5 33.8L24.8 33.8M24.8 33.8L23.9 32.3M27.4 35.4L26.5 36.9M26.5 36.9L24.8 36.9M24.8 36.9L23.9 35.4M27.4 38.4L26.5 39.9M26.5 39.9L24.8 39.9M24.8 39.9L23.9 38.4M27.4 41.4L26.5 42.9M26.5 42.9L24.8 42.9M24.8 42.9L23.9 41.4M27.4 44.5L26.5 46.0M26.5 46.0L24.8 46.0M24.8 46.0L23.9 44.5M27.4 47.5L26.5 49.0M26.5 49.0L24.8 49.0M24.8 49.0L23.9 47.5M30.0 6.6L29.1 8.1M29.1 8.1L27.4 8.1M27.4 8.1L26.5 6.6M30.0 9.6L29.1 11.1M29.1 11.1L27.4 11.1M27.4 11.1L26.5 9.6M30.0 12.6L29.1 14.1M29.1 14.1L27.4 14.1M27.4 14.1L26.5 12.6M30.0 15.7L29.1 17.2M29.1 17.2L27.4 17.2M27.4 17.2L26.5 15.7M30.0 18.7L29.1 20.2M29.1 20.2L27.4 20.2M27.4 20.2L26.5 18.7M30.0 21.7L29.1 23.2M29.1 23.2L27.4 23.2M27.4 23.2L26.5 21.7M30.0 24.8L29.1 26.3M29.1 26.3L27.4 26.3M27.4 26.3L26.5 24.8M30.0 27.8L29.1 29.3M29.1 29.3L27.4 29.3M27.4 29.3L26.5 27.8M30.0 30.8L29.1 32.3M29.1 32.3L27.4 32.3M27.4 32.3L26.5 30.8M30.0 33.8L29.1 35.4M29.1 35.4L27.4 35.4M27.4 35.4L26.5 33.8M30.0 36.9L29.1 38.4M29.1 38.4L27.4 38.4M27.4 38.4L26.5 36.9M30.0 39.9L29.1 41.4M29.1 41.4L27.4 41.4M27.4 41.4L26.5 39.9M30.0 42.9L29.1 44.5M29.1 44.5L27.4 44.5M27.4 44.5L26.5 42.9M30.0 46.0L29.1 47.5M29.1 47.5L27.4 47.5M27.4 47.5L26.5 46.0M32.6 8.1L31.8 9.6M31.8 9.6L30.0 9.6M30.0 9.6L29.1 8.1M32.6 11.1L31.8 12.6M31.8 12.6L30.0 12.6M30.0 12.6L29.1 11.1M32.6 14.1L31.8 15.7M31.8 15.7L30.0 15.7M30.0 15.7L29.1 14.1M32.6 17.2L31.8 18.7M31.8 18.7L30.0 18.7M30.0 18.7L29.1 17.2M32.6 20.2L31.8 21.7M31.8 21.7L30.0 21.7M30.0 21.7L29.1 20.2M32.6 23.2L31.8 24.8M31.8 24.8L30.0 24.8M30.0 24.8L29.1 23.2M32.6 26.3L31.8 27.8M31.8 27.8L30.0 27.8M30.0 27.8L29.1 26.3M32.6 29.3L31.8 30.8M31.8 30.8L30.0 30.8M30.0 30.8L29.1 29.3M32.6 32.3L31.8 33.8M31.8 33.8L30.0 33.8M30.0 33.8L29.1 32.3M32.6 35.4L31.8 36.9M31.8 36.9L30.0 36.9M30.0 36.9L29.1 35.4M32.6 38.4L31.8 39.9M31.8 39.9L30.0 39.9M30.0 39.9L29.1 38.4M32.6 41.4L31.8 42.9M31.8 42.9L30.0 42.9M30.0 42.9L29.1 41.4M32.6 44.5L31.8 46.0M31.8 46.0L30.0 46.0M30.0 46.0L29.1 44.5M32.6 47.5L31.8 49.0M31.8 49.0L30.0 49.0M30.0 49.0L29.1 47.5M35.2 6.6L34.4 8.1M34.4 8.1L32.6 8.1M32.6 8.1L31.8 6.6M35.2 9.6L34.4 11.1M34.4 11.1L32.6 11.1M32.6 11.1L31.8 9.6M35.2 12.6L34.4 14.1M34.4 14.1L32.6 14.1M32.6 14.1L31.8 12.6M35.2 15.7L34.4 17.2M34.4 17.2L32.6 17.2M32.6 17.2L31.8 15.7M35.2 18.7L34.4 20.2M34.4 20.2L32.6 20.2M32.6 20.2L31.8 18.7M35.2 21.7L34.4 23.2M34.4 23.2L32.6 23.2M32.6 23.2L31.8 21.7M35.2 24.8L34.4 26.3M34.4 26.3L32.6 26.3M32.6 26.3L31.8 24.8M35.2 27.8L34.4 29.3M34.4 29.3L32.6 29.3M32.6 29.3L31.8 27.8M35.2 30.8L34.4 32.3M34.4 32.3L32.6 32.3M32.6 32.3L31.8 30.8M35.2 33.8L34.4 35.4M34.4 35.4L32.6 35.4M32.6 35.4L31.8 33.8M35.2 36.9L34.4 38.4M34.4 38.4L32.6 38.4M32.6 38.4L31.8 36.9M35.2 39.9L34.4 41.4M34.4 41.4L32.6 41.4M32.6 41.4L31.8 39.9M35.2 42.9L34.4 44.5M34.4 44.5L32.6 44.5M32.6 44.5L31.8 42.9M35.2 46.0L34.4 47.5M34.4 47.5L32.6 47.5M32.6 47.5L31.8 46.0M37.9 8.1L37.0 9.6M37.0 9.6L35.2 9.6M35.2 9.6L34.4 8.1M37.9 11.1L37.0 12.6M37.0 12.6L35.2 12.6M35.2 12.6L34.4 11.1M37.9 14.1L37.0 15.7M37.0 15.7L35.2 15.7M35.2 15.7L34.4 14.1M37.9 17.2L37.0 18.7M37.0 18.7L35.2 18.7M35.2 18.7L34.4 17.2M37.9 20.2L37.0 21.7M37.0 21.7L35.2 21.7M35.2 21.7L34.4 20.2M37.9 23.2L37.0 24.8M37.0 24.8L35.2 24.8M35.2 24.8L34.4 23.2M37.9 26.3L37.0 27.8M37.0 27.8L35.2 27.8M35.2 27.8L34.4 26.3M37.9 29.3L37.0 30.8M37.0 30.8L35.2 30.8M35.2 30.8L34.4 29.3M37.9 32.3L37.0 33.8M37.0 33.8L35.2 33.8M35.2 33.8L34.4 32.3M37.9 35.4L37.0 36.9M37.0 36.9L35.2 36.9M35.2 36.9L34.4 35.4M37.9 38.4L37.0 39.9M37.0 39.9L35.2 39.9M35.2 39.9L34.4 38.4M37.9 41.4L37.0 42.9M37.0 42.9L35.2 42.9M35.2 42.9L34.4 41.4M37.9 44.5L37.0 46.0M37.0 46.0L35.2 46.0M35.2 46.0L34.4 44.5M37.9 47.5L37.0 49.0M37.0 49.0L35.2 49.0M35.2 49.0L34.4 47.5M40.5 6.6L39.6 8.1M39.6 8.1L37.9 8.1M37.9 8.1L37.0 6.6M40.5 9.6L39.6 11.1M39.6 11.1L37.9 11.1M37.9 11.1L37.0 9.6M40.5 12.6L39.6 14.1M39.6 14.1L37.9 14.1M37.9 14.1L37.0 12.6M40.5 15.7L39.6 17.2M39.6 17.2L37.9 17.2M37.9 17.2L37.0 15.7M40.5 18.7L39.6 20.2M39.6 20.2L37.9 20.2M37.9 20.2L37.0 18.7M40.5 21.7L39.6 23.2M39.6 23.2L37.9 23.2M37.9 23.2L37.0 21.7M40.5 24.8L39.6 26.3M39.6 26.3L37.9 26.3M37.9 26.3L37.0 24.8M40.5 27.8L39.6 29.3M39.6 29.3L37.9 29.3M37.9 29.3L37.0 27.8M40.5 30.8L39.6 32.3M39.6 32.3L37.9 32.3M37.9 32.3L37.0 30.8M40.5 33.8L39.6 35.4M39.6 35.4L37.9 35.4M37.9 35.4L37.0 33.8M40.5 36.9L39.6 38.4M39.6 38.4L37.9 38.4M37.9 38.4L37.0 36.9M40.5 39.9L39.6 41.4M39.6 41.4L37.9 41.4M37.9 41.4L37.0 39.9M40.5 42.9L39.6 44.5M39.6 44.5L37.9 44.5M37.9 44.5L37.0 42.9M40.5 46.0L39.6 47.5M39.6 47.5L37.9 47.5M37.9 47.5L37.0 46.0" stroke="#3c4654" stroke-width="0.7" fill="none"/></g></svg><svg class="ic" style="left:5px;top:127px" width="32" height="32" viewBox="0 0 32 32"><rect x="0" y="7" width="32" height="18" fill="#fff"/><g fill="none" stroke="#111" stroke-width="1" stroke-linecap="round"><path d="M9.6 12 Q4 13.4 3.4 17.6 Q5 20 8.4 17.8"/><path d="M11 20.4 Q13.4 18.2 12.6 20.4 Q11.6 21.8 14 21.4"/><path d="M16.4 13.4 L15.6 20.6 M20.8 12.4 L20.6 20.4 M15.8 16.8 L21 16.2"/><path d="M26.6 18 Q23.4 19.6 24.4 21.4 Q26.4 22.4 27.4 20.6 Q26.4 19.4 24.8 20.6"/></g></svg><svg class="ic" style="left:5px;top:164px" width="32" height="32" viewBox="0 0 32 32"><g fill="none" filter="url(#sh)"><path d="M4.8 10.5 C10 10.5 11 22.6 16 22.6 C21 22.6 22 10.5 27.3 10.5 M4.8 22 C10 22 11 9.8 16 9.8 C21 9.8 22 22 27.3 22" stroke="#0c1322" stroke-width="4.2"/><path d="M4.8 10.5 C10 10.5 11 22.6 16 22.6 C21 22.6 22 10.5 27.3 10.5 M4.8 22 C10 22 11 9.8 16 9.8 C21 9.8 22 22 27.3 22" stroke="#a9cdf0" stroke-width="2.5"/></g></svg><svg class="ic" style="left:5px;top:201px" width="32" height="32" viewBox="0 0 32 32"><g filter="url(#sh)"><circle cx="14.6" cy="14" r="9" fill="url(#bb)" stroke="#0c1322" stroke-width="0.9"/><ellipse cx="14.6" cy="9.5" rx="5.22" ry="2.7" fill="#fff" opacity=".55"/></g><g stroke="#0c1322" stroke-width="1.7" stroke-linejoin="round" paint-order="stroke" filter="url(#sh)"><path d="M19.3 15h3.4v4.5h4.5v3.4h-4.5v4.5h-3.4v-4.5h-4.5v-3.4h4.5z" fill="#fff"/></g></svg><svg class="ic" style="left:5px;top:238px" width="32" height="32" viewBox="0 0 32 32"><g stroke="#0c1322" stroke-width="1.5" stroke-linejoin="round" paint-order="stroke" filter="url(#sh)"><path d="M16 4.2 L19.9 8.6 L17.7 8.6 L17.7 14.2 L23.4 14.2 L23.4 12 L27.6 15.9 L23.4 19.8 L23.4 17.6 L17.7 17.6 L17.7 23.2 L19.9 23.2 L16 27.6 L12.1 23.2 L14.3 23.2 L14.3 17.6 L8.6 17.6 L8.6 19.8 L4.4 15.9 L8.6 12 L8.6 14.2 L14.3 14.2 L14.3 8.6 L12.1 8.6 Z" fill="url(#gb)"/></g><rect x="14.2" y="14.1" width="3.6" height="3.6" fill="#2f3f58"/></svg><svg class="ic" style="left:5px;top:275px" width="32" height="32" viewBox="0 0 32 32"><g stroke="#0c1322" stroke-width="1.4" stroke-linejoin="round" paint-order="stroke" filter="url(#sh)"><path d="M5 21 L19.6 5.6 L26.4 12.8 L11.6 26.2 L8.6 25.6 Z" fill="#f4f4f4"/></g><path d="M12.6 13 L19.6 5.6 L26.4 12.8 L19.2 19.4 Z" fill="#8fb6e2"/><path d="M19.2 19.4 L26.4 12.8 L26 15 L20 20.6 Z" fill="#6f97c4"/><path d="M11.6 26.2 L19.2 19.4 L20 20.6 L12 27.2 Z" fill="#c9c9c9"/><path d="M11.4 26.8 H24.4" stroke="#05080e" stroke-width="1.2"/></svg><svg class="ic" style="left:5px;top:312px" width="32" height="32" viewBox="0 0 32 32"><path d="M10.6 2.4 Q13 1.6 16 3 Q24 5.4 26.2 7.4 Q27.6 9.6 25 12 Q20 15 17.6 16.8 Q13 19.6 9.4 18.6 Q6.8 17.6 5.8 13.4 Q1.6 10.8 2 8.6 Q3 6.6 10.6 2.4Z" fill="url(#gb)" filter="url(#sh)"/><g stroke="#0c1322" stroke-width="1.6" stroke-linejoin="round" paint-order="stroke" filter="url(#sh)"><path d="M0 0 L0 12.2 L3 9.6 L5.6 14.8 L7.8 13.7 L5.3 8.6 L9.3 8.3 Z" fill="url(#gcur)" transform="translate(18.8,16.8) rotate(-14) scale(1)"/></g></svg><svg class="ic" style="left:5px;top:349px" width="32" height="32" viewBox="0 0 32 32"><g stroke="#0c1322" stroke-width="1.6" stroke-linejoin="round" paint-order="stroke" filter="url(#sh)"><path d="M0 0 L0 12.2 L3 9.6 L5.6 14.8 L7.8 13.7 L5.3 8.6 L9.3 8.3 Z" fill="url(#gcur)" transform="translate(8.6,6.4) rotate(-14) scale(1.42)"/></g></svg><svg class="ic" style="left:5px;top:386px" width="32" height="32" viewBox="0 0 32 32"><rect x="2.8" y="2.9" width="15.5" height="12.8" fill="url(#gb)" filter="url(#sh)"/><g stroke="#0c1322" stroke-width="1.6" stroke-linejoin="round" paint-order="stroke" filter="url(#sh)"><path d="M0 0 L0 12.2 L3 9.6 L5.6 14.8 L7.8 13.7 L5.3 8.6 L9.3 8.3 Z" fill="url(#gcur)" transform="translate(18.8,16.8) rotate(-14) scale(1)"/></g></svg><svg class="ic" style="left:5px;top:423px" width="32" height="32" viewBox="0 0 32 32"><g filter="url(#sh)"><path d="M25.2 9.2 A11.6 11.6 0 1 0 27.4 13.4" fill="none" stroke="#a9cbee" stroke-width="1.2"/><path d="M21.2 8.4 L26.4 7 L25.6 12.2 Z" fill="#a9cdf0"/></g></svg><svg class="ic" style="left:5px;top:460px" width="32" height="32" viewBox="0 0 32 32"><g stroke="#0c1322" stroke-width="1.7" stroke-linejoin="round" paint-order="stroke" filter="url(#sh)"><rect x="4.7" y="10.5" width="23.6" height="12.3" rx="0.8" fill="url(#grul)"/></g><path d="M8.4 10.5v6M12.4 10.5v4.4M16.5 10.5v8.4M20.7 10.5v4.4M24.8 10.5v6.4" stroke="#1b2740" stroke-width="1.3"/></svg><svg class="ic" style="left:5px;top:497px" width="32" height="32" viewBox="0 0 32 32"><g filter="url(#sh)" stroke="#a9cdf0" stroke-width="1.1" fill="#a9cdf0"><path d="M15.8 17.4 V7.6 M15.8 17.4 L7.4 22.4 M15.8 17.4 L24.2 22.4" fill="none"/><path d="M15.8 4.8 L17.8 8 L13.8 8 Z M5 23.8 L6.6 20.4 L8.8 23.8 Z M26.6 23.8 L25 20.4 L22.8 23.8 Z" stroke="none"/></g></svg><svg class="ic" style="left:7px;top:538px" width="32" height="32" viewBox="0 0 32 32"><g filter="url(#sh)"><path d="M17.99 18.30 L17.99 20.90 L16.25 20.95 L15.92 21.95 L17.30 23.01 L15.78 25.11 L14.34 24.13 L13.49 24.75 L13.98 26.42 L11.51 27.22 L10.93 25.58 L9.87 25.58 L9.29 27.22 L6.82 26.42 L7.31 24.75 L6.46 24.13 L5.02 25.11 L3.50 23.01 L4.88 21.95 L4.55 20.95 L2.81 20.90 L2.81 18.30 L4.55 18.25 L4.88 17.25 L3.50 16.19 L5.02 14.09 L6.46 15.07 L7.31 14.45 L6.82 12.78 L9.29 11.98 L9.87 13.62 L10.93 13.62 L11.51 11.98 L13.98 12.78 L13.49 14.45 L14.34 15.07 L15.78 14.09 L17.30 16.19 L15.92 17.25 L16.25 18.25 Z" fill="url(#gw)" stroke="#1a2233" stroke-width="0.7" stroke-linejoin="round"/><circle cx="10.4" cy="19.6" r="3.8" fill="none" stroke="#6f93bf" stroke-width="1.4"/><circle cx="10.4" cy="19.6" r="1.5" fill="#1c2638"/><path d="M24.02 8.45 L24.02 10.35 L22.69 10.36 L22.46 11.08 L23.52 11.88 L22.41 13.41 L21.32 12.64 L20.71 13.09 L21.10 14.36 L19.31 14.94 L18.88 13.68 L18.12 13.68 L17.69 14.94 L15.90 14.36 L16.29 13.09 L15.68 12.64 L14.59 13.41 L13.48 11.88 L14.54 11.08 L14.31 10.36 L12.98 10.35 L12.98 8.45 L14.31 8.44 L14.54 7.72 L13.48 6.92 L14.59 5.39 L15.68 6.16 L16.29 5.71 L15.90 4.44 L17.69 3.86 L18.12 5.12 L18.88 5.12 L19.31 3.86 L21.10 4.44 L20.71 5.71 L21.32 6.16 L22.41 5.39 L23.52 6.92 L22.46 7.72 L22.69 8.44 Z" fill="url(#gw)" stroke="#1a2233" stroke-width="0.7" stroke-linejoin="round"/><circle cx="18.5" cy="9.4" r="2.6" fill="none" stroke="#6f93bf" stroke-width="1"/><circle cx="18.5" cy="9.4" r="1" fill="#1c2638"/></g><path d="M20.8 -0.8 L32.2 -0.8 L26.5 8 Z" fill="url(#gtri)"/></svg><div class="seph" style="left:4px;top:535px;width:34px"></div></div>
<div class="tb" style="left:2px;top:699px;width:43px;height:355px"><div class="hdh" style="left:4px;top:5px;width:34px"></div><svg class="ic" style="left:5px;top:17px" width="32" height="32" viewBox="0 0 32 32"><g stroke="#0c1322" stroke-width="1.7" stroke-linejoin="round" paint-order="stroke" filter="url(#sh)"><path d="M8.7 4.8h10.6l5 5v15.7q0 .7-.7.7h-14.9q-.7 0-.7-.7v-20q0-.7.7-.7z" fill="url(#gb2)"/><path d="M19.3 4.8v5h5z" fill="#d6e8f9" stroke="none"/></g><g stroke="#5a6b84" stroke-width="0.7"><path d="M14.7 12.5h3.2v3.8h3.8v3.2h-3.8v3.8h-3.2v-3.8h-3.8v-3.2h3.8z" fill="#fff"/></g></svg><svg class="ic" style="left:5px;top:54px" width="32" height="32" viewBox="0 0 32 32"><g stroke="#0c1322" stroke-width="1.7" stroke-linejoin="round" paint-order="stroke" filter="url(#sh)"><path d="M9.3 4.8h9.9l4.4 4.4v8.9q0 .7-.7.7h-13.6q-.7 0-.7-.7v-12.6q0-.7.7-.7z" fill="url(#gb2)"/><path d="M19.2 4.8v4.4h4.4z" fill="#d6e8f9" stroke="none"/></g><g stroke="#0c1322" stroke-width="1.6" stroke-linejoin="round" paint-order="stroke" filter="url(#sh)"><path d="M6.2 11.6 q0-1.2 1.2-1.2 h1.2 v7.6 h-2.4z M26.4 11.6 q0-1.2-1.2-1.2 h-1.6 v7.6 h2.8z" fill="#f4f4f4"/><path d="M6 17.6 h20.4 l-0.8 7.8 q-.1 1-1.1 1 h-16.6 q-1 0-1.1-1z" fill="url(#gw)"/></g></svg><svg class="ic" style="left:5px;top:95px" width="32" height="32" viewBox="0 0 32 32"><g stroke="#0c1322" stroke-width="1.7" stroke-linejoin="round" paint-order="stroke" filter="url(#sh)"><path d="M7.4 5.4 h15.8 l3 3 v16.6 q0 1-1 1 h-17.8 q-1 0-1-1 v-18.6 q0-1 1-1z" fill="#a6cdf2"/></g><rect x="10.2" y="5.6" width="12.6" height="8.2" fill="#5b6069" stroke="#2e323a" stroke-width="0.5"/><rect x="18" y="7.2" width="2.8" height="4.8" fill="#dcd9cc"/><rect x="9.9" y="16.6" width="13.2" height="8.8" fill="#ece9db" stroke="#45506a" stroke-width="0.6"/></svg><svg class="ic" style="left:5px;top:132px" width="32" height="32" viewBox="0 0 32 32"><g stroke="#0c1322" stroke-width="1.7" stroke-linejoin="round" paint-order="stroke" filter="url(#sh)"><path d="M7.4 5.4 h15.8 l3 3 v16.6 q0 1-1 1 h-17.8 q-1 0-1-1 v-18.6 q0-1 1-1z" fill="#a6cdf2"/></g><rect x="10.2" y="5.6" width="12.6" height="8.2" fill="#5b6069" stroke="#2e323a" stroke-width="0.5"/><rect x="18" y="7.2" width="2.8" height="4.8" fill="#dcd9cc"/><rect x="9.9" y="16.6" width="13.2" height="8.8" fill="#ece9db" stroke="#45506a" stroke-width="0.6"/><g stroke="#0c1322" stroke-width="1.5" stroke-linejoin="round" paint-order="stroke" filter="url(#sh)"><path d="M14.2 23.6 L15 20.6 L23.8 11.8 L26.4 14.2 L17.4 23 Z" fill="#9cc6ee"/></g><path d="M14.2 23.6 L15 20.6 L17.4 23 Z" fill="#f0e6d0"/></svg><svg class="ic" style="left:5px;top:173px" width="32" height="32" viewBox="0 0 32 32"><g stroke="#0c1322" stroke-width="1.7" stroke-linejoin="round" paint-order="stroke" filter="url(#sh)"><path d="M8.7 4.7h10.6l5 5v15.9q0 .7-.7.7h-14.9q-.7 0-.7-.7v-20.2q0-.7.7-.7z" fill="url(#gb2)"/><path d="M19.3 4.7v5h5z" fill="#d6e8f9" stroke="none"/></g><g transform="rotate(45 16.3 18)"><path d="M14.7 12.4h3.2v4h4v3.2h-4v4h-3.2v-4h-4v-3.2h4z" fill="#33435c"/></g></svg><svg class="ic" style="left:7px;top:213px" width="32" height="32" viewBox="0 0 32 32"><g filter="url(#sh)"><path d="M17.99 18.30 L17.99 20.90 L16.25 20.95 L15.92 21.95 L17.30 23.01 L15.78 25.11 L14.34 24.13 L13.49 24.75 L13.98 26.42 L11.51 27.22 L10.93 25.58 L9.87 25.58 L9.29 27.22 L6.82 26.42 L7.31 24.75 L6.46 24.13 L5.02 25.11 L3.50 23.01 L4.88 21.95 L4.55 20.95 L2.81 20.90 L2.81 18.30 L4.55 18.25 L4.88 17.25 L3.50 16.19 L5.02 14.09 L6.46 15.07 L7.31 14.45 L6.82 12.78 L9.29 11.98 L9.87 13.62 L10.93 13.62 L11.51 11.98 L13.98 12.78 L13.49 14.45 L14.34 15.07 L15.78 14.09 L17.30 16.19 L15.92 17.25 L16.25 18.25 Z" fill="url(#gw)" stroke="#1a2233" stroke-width="0.7" stroke-linejoin="round"/><circle cx="10.4" cy="19.6" r="3.8" fill="none" stroke="#6f93bf" stroke-width="1.4"/><circle cx="10.4" cy="19.6" r="1.5" fill="#1c2638"/><path d="M24.02 8.45 L24.02 10.35 L22.69 10.36 L22.46 11.08 L23.52 11.88 L22.41 13.41 L21.32 12.64 L20.71 13.09 L21.10 14.36 L19.31 14.94 L18.88 13.68 L18.12 13.68 L17.69 14.94 L15.90 14.36 L16.29 13.09 L15.68 12.64 L14.59 13.41 L13.48 11.88 L14.54 11.08 L14.31 10.36 L12.98 10.35 L12.98 8.45 L14.31 8.44 L14.54 7.72 L13.48 6.92 L14.59 5.39 L15.68 6.16 L16.29 5.71 L15.90 4.44 L17.69 3.86 L18.12 5.12 L18.88 5.12 L19.31 3.86 L21.10 4.44 L20.71 5.71 L21.32 6.16 L22.41 5.39 L23.52 6.92 L22.46 7.72 L22.69 8.44 Z" fill="url(#gw)" stroke="#1a2233" stroke-width="0.7" stroke-linejoin="round"/><circle cx="18.5" cy="9.4" r="2.6" fill="none" stroke="#6f93bf" stroke-width="1"/><circle cx="18.5" cy="9.4" r="1" fill="#1c2638"/></g><path d="M20.8 -0.8 L32.2 -0.8 L26.5 8 Z" fill="url(#gtri)"/></svg><div class="seph" style="left:4px;top:91px;width:34px"></div><div class="seph" style="left:4px;top:169px;width:34px"></div><div class="seph" style="left:4px;top:210px;width:34px"></div></div>
<div class="tb" style="left:1864px;top:120px;width:54px;height:934px"><div class="hdh" style="left:6px;top:5px;width:46px"></div><svg class="ic" style="left:11px;top:16px" width="32" height="32" viewBox="0 0 32 32"><rect width="32" height="32" fill="url(#gqt)"/><path d="M0.3 0V31.7H32" fill="none" stroke="#f4f4f2" stroke-width="0.6"/><path d="M0 3 Q0 1.6 1.6 1.6 L19.6 3.4 Q21 3.6 21 5 L21 18 L13.6 23.4 L1.4 25.2 Q0 25.2 0 24 Z" fill="#66b23a"/><path d="M0 3 Q0 1.6 1.6 1.6 L2 25.1 L1.4 25.2 Q0 25.2 0 24 Z" fill="#3c8a30"/><text x="5" y="18.3" font-family="Liberation Sans" font-size="17.7" fill="#f2f8ee" stroke="#f2f8ee" stroke-width="0.45" textLength="13.4" lengthAdjust="spacingAndGlyphs">Qt</text><path d="M9.6 17 L12.6 21 L11 21.4 L8.6 18Z" fill="#f2f8ee"/><path d="M14.4 25.8 L15.6 22.8 L24.6 14 L27 16.4 L17.6 25 Z" fill="#f6c81c"/><path d="M16.4 25.4 L26.4 15.8 L27 16.4 L17.6 25Z" fill="#f0a020"/><path d="M24.6 14 L25.8 12.8 Q27 12.4 27.8 13.4 Q28.6 14.6 28 15.4 L27 16.4Z" fill="#f2b4bc"/><path d="M14.4 25.8 L15.6 22.8 L17.6 25Z" fill="#e6dcc8"/><path d="M14.4 25.8 L15 24.4 L15.8 25.3Z" fill="#555"/></svg><svg class="ic" style="left:11px;top:53px" width="32" height="32" viewBox="0 0 32 32"><rect x="8.7" y="3" width="3.3" height="26" fill="#fff"/><rect x="18.8" y="3" width="3.3" height="26" fill="#fff"/><path d="M3.8 4 L4.6 10 L5.4 17 L6.2 22 L6.6 29" stroke="#c8c6c2" stroke-width="2.2" fill="none"/><path d="M28.2 4 L27.2 10 L26.2 17 L25.4 22 L24.8 29" stroke="#c8c6c2" stroke-width="2.2" fill="none"/></svg><svg class="ic" style="left:11px;top:90px" width="32" height="32" viewBox="0 0 32 32"><path d="M23.4 1.4 L27.8 9.6 M4.2 24.2 L8.4 31" stroke="#9a8888" stroke-width="0.8"/><path d="M11.8 9.8 Q13 14 20.1 18.6 Q22.6 21 22.2 24.1 Q20 19.6 13.6 16.3 Q11.2 13.6 11.8 9.8Z" fill="#8c0000"/><path d="M11.8 9.8 Q18 6.2 25.3 6.4 Q28.6 6.8 30 8.5 Q30.2 12.4 27.9 15 Q24.4 17.8 20.1 18.6 Q13.4 14.6 11.8 9.8Z" fill="#ee0000"/><path d="M12.6 10.4 Q18.4 7.4 25.2 7.4 Q28 7.6 29.2 8.8 Q24 7.6 18.6 9.6 Q14.8 11 12.6 10.4Z" fill="#ff5a5a"/><path d="M1.2 22 Q4.6 19.8 9.7 18.9 Q15 18.2 20.1 18.6 Q22.8 21 22.2 24.1 Q20.4 26.8 16.2 28 Q10 28.4 4.6 25.4 Q2 24 1.2 22Z" fill="#f20000"/><path d="M2.4 22 Q6 20.4 10 19.8 Q15 19.2 19.4 19.6 Q13 20 9 21.4 Q5 22.8 2.4 22Z" fill="#ff5a5a"/></svg><svg class="ic" style="left:11px;top:127px" width="32" height="32" viewBox="0 0 32 32"><rect width="32" height="32" fill="#86a4cf"/><g filter="url(#bl1)"><ellipse cx="16.2" cy="17" rx="12.6" ry="12.8" fill="#e2e9f4"/><circle cx="13.3" cy="4.6" r="2.4" fill="#e2e9f4"/><circle cx="21.9" cy="3.7" r="2.4" fill="#e2e9f4"/></g><circle cx="13" cy="17.2" r="2.3" fill="#8ea9d2"/><circle cx="19.6" cy="17.2" r="2.3" fill="#8ea9d2"/><ellipse cx="16.3" cy="11.8" rx="1.9" ry="1.5" fill="#9ab3d8"/><ellipse cx="16.3" cy="23.2" rx="2.6" ry="1.6" fill="#b7c9e4"/><path d="M26.9 19.4 L24.8 23.9 L21.0 27.1 L16.2 28.2 L11.5 27.1 L7.6 24.0 L5.5 19.5 L5.5 14.6 L7.6 10.1 L11.4 6.9 L16.2 5.8 L20.9 6.9 L24.8 10.0 L26.9 14.5Z M21.9 19.4 L18.6 22.7 L13.8 22.7 L10.5 19.4 L10.5 14.6 L13.8 11.3 L18.6 11.3 L21.9 14.6ZM21.9 19.4L24.8 23.9M18.6 22.7L21.0 27.1M13.8 22.7L11.5 27.1M10.5 19.4L5.5 19.5M10.5 14.6L7.6 10.1M13.8 11.3L11.4 6.9M18.6 11.3L20.9 6.9M21.9 14.6L26.9 14.5M16.2 10.8V23.2 M13.3 4.6 L16.2 5.8 M21.9 3.7 L20.9 6.9" fill="none" stroke="#3a3f4a" stroke-width="0.55" opacity=".75"/><g fill="#15181f"><circle cx="26.9" cy="19.4" r="0.85"/><circle cx="24.8" cy="23.9" r="0.85"/><circle cx="21.0" cy="27.1" r="0.85"/><circle cx="16.2" cy="28.2" r="0.85"/><circle cx="11.5" cy="27.1" r="0.85"/><circle cx="7.6" cy="24.0" r="0.85"/><circle cx="5.5" cy="19.5" r="0.85"/><circle cx="5.5" cy="14.6" r="0.85"/><circle cx="7.6" cy="10.1" r="0.85"/><circle cx="11.4" cy="6.9" r="0.85"/><circle cx="16.2" cy="5.8" r="0.85"/><circle cx="20.9" cy="6.9" r="0.85"/><circle cx="24.8" cy="10.0" r="0.85"/><circle cx="26.9" cy="14.5" r="0.85"/><circle cx="21.9" cy="19.4" r="0.85"/><circle cx="18.6" cy="22.7" r="0.85"/><circle cx="13.8" cy="22.7" r="0.85"/><circle cx="10.5" cy="19.4" r="0.85"/><circle cx="10.5" cy="14.6" r="0.85"/><circle cx="13.8" cy="11.3" r="0.85"/><circle cx="18.6" cy="11.3" r="0.85"/><circle cx="21.9" cy="14.6" r="0.85"/><circle cx="13.3" cy="4.6" r="0.85"/><circle cx="21.9" cy="3.7" r="0.85"/><circle cx="16.2" cy="14.6" r="0.85"/><circle cx="16.2" cy="19.6" r="0.85"/></g></svg><svg class="ic" style="left:11px;top:164px" width="32" height="32" viewBox="0 0 32 32"><defs><filter id="bl"><feGaussianBlur stdDeviation="1.5"/></filter><clipPath id="ch"><rect width="32" height="32"/></clipPath></defs><g clip-path="url(#ch)"><rect width="32" height="32" fill="#6cf0b8"/><g filter="url(#bl)"><ellipse cx="5" cy="14" rx="7" ry="8" fill="#b4f094"/><ellipse cx="3" cy="27" rx="13" ry="8" fill="#ff8a30"/><ellipse cx="17" cy="30" rx="9" ry="4" fill="#f2d270"/><circle cx="1" cy="31" r="4.5" fill="#ff1000"/><circle cx="3" cy="3" r="4" fill="#50e8d4"/><ellipse cx="22" cy="11" rx="9" ry="4" fill="#30c4f0"/><ellipse cx="15.5" cy="4.6" rx="4.2" ry="3" fill="#3c44f0"/><circle cx="30.5" cy="2.5" r="5.5" fill="#7c00ff"/><ellipse cx="30" cy="13" rx="3.6" ry="7" fill="#3864ff"/><ellipse cx="23" cy="21" rx="5.5" ry="3.2" fill="#2ca4f0"/><ellipse cx="24" cy="14.5" rx="3" ry="2.6" fill="#74f8c0"/><ellipse cx="21" cy="3" rx="3.2" ry="3" fill="#74f8c0"/><ellipse cx="9" cy="7" rx="3" ry="2" fill="#50e0d0"/></g><g filter="url(#bl2)"><circle cx="6.3" cy="9.5" r="1.9" fill="#ff9a40"/><circle cx="6.3" cy="9.5" r="1.1" fill="#ff2000"/><circle cx="8.8" cy="17.5" r="2.8" fill="#ff9a40"/><circle cx="8.8" cy="17.5" r="2.1" fill="#ff0000"/><ellipse cx="11" cy="25" rx="3.8" ry="4.4" fill="#ff8030" transform="rotate(-25 11 25)"/><ellipse cx="11" cy="25" rx="2.8" ry="3.6" fill="#ff0000" transform="rotate(-25 11 25)"/><circle cx="17.3" cy="17.6" r="1.5" fill="#ffa050"/><ellipse cx="7.5" cy="0.8" rx="2.2" ry="0.9" fill="#ffb060"/><path d="M32 24 L27.6 28.6 L32 30Z" fill="#ff0000" stroke="#ff9a40" stroke-width="1"/><ellipse cx="20.6" cy="31" rx="1.6" ry="1" fill="#ff5020"/></g></g></svg><svg class="ic" style="left:11px;top:201px" width="32" height="32" viewBox="0 0 32 32"><text x="-0.6" y="22" font-family="Liberation Sans" font-size="16.8" fill="#dde0e6" textLength="31.2" lengthAdjust="spacingAndGlyphs">HEX</text></svg><svg class="ic" style="left:11px;top:238px" width="32" height="32" viewBox="0 0 32 32"><rect width="32" height="32" fill="#fff"/><g fill="none" stroke="#555" stroke-width="0.7"><path d="M2 8 Q6 4 9 8 L12 5 M9 8 L12 14 L18 12 L22 6 L28 3 M22 6 L27 10 L31 8 M12 14 L10 20 L4 22 L2 27 M10 20 L15 25 L13 31 M15 25 L22 24 L26 28 L31 26 M22 24 L24 18 L30 16 M24 18 L18 12 M6 1 L8 4 M17 29 L20 31 M1 15 L5 14 L7 17"/></g></svg><svg class="ic" style="left:11px;top:275px" width="32" height="32" viewBox="0 0 32 32"><polygon points="8.2,2.6 23.8,2.6 31.4,15.8 23.8,29 8.2,29 0.6,15.8" fill="#2f6495"/><polygon points="9.6,6 22.4,6 28,15.8 22.4,25.6 9.6,25.6 4,15.8" fill="#fff"/><path d="M10.6 10.4 H25.4 L26.6 13 H12 Z" fill="#2f6495"/><path d="M5.4 18.6 H20 L21.4 21.2 H6.6 Z" fill="#2f6495"/></svg><svg class="ic" style="left:11px;top:312px" width="32" height="32" viewBox="0 0 32 32"><polygon points="8.2,2.6 23.8,2.6 31.4,15.8 23.8,29 8.2,29 0.6,15.8" fill="#2f6495"/><polygon points="9.6,6 22.4,6 28,15.8 22.4,25.6 9.6,25.6 4,15.8" fill="#fff"/><path d="M10.6 10.4 H25.4 L26.6 13 H12 Z" fill="#2f6495"/><path d="M5.4 18.6 H20 L21.4 21.2 H6.6 Z" fill="#2f6495"/></svg><svg class="ic" style="left:11px;top:349px" width="32" height="32" viewBox="0 0 32 32"><polygon points="15.6,1 30.6,16 15.6,31 0.6,16" fill="#fffcd2" stroke="#000" stroke-width="0.9"/><path d="M12 4 V20 M11.6 20 L4 28" stroke="#00c800" stroke-width="1.5"/><rect x="9.6" y="1.6" width="5" height="4.8" fill="#f050d0" stroke="#902080" stroke-width="0.5"/><circle cx="11.8" cy="20" r="3" fill="#000"/><circle cx="1.8" cy="22.8" r="1.9" fill="#e80000"/><circle cx="3.4" cy="28.4" r="3.4" fill="#1060f0"/><path d="M1 27 h5 M0.6 29 h5.6 M2.4 25.6 v5.6 M4.4 25.6 v5.6" stroke="#6aa8ff" stroke-width="0.5"/><path d="M15.6 21.4 Q16.8 17.6 21 17 L24.6 16.6 Q26.6 19.4 28.6 20.6 V27.6 Q24 28.6 20 26.6 Q16.8 24.8 15.6 21.4Z" fill="#f6cda6" stroke="#000" stroke-width="0.8"/><circle cx="18.8" cy="21" r="1.5" fill="#fff" stroke="#000" stroke-width="0.7"/><rect x="28.6" y="20.4" width="3.2" height="8.6" fill="#3a0ca8"/></svg><svg class="ic" style="left:11px;top:386px" width="32" height="32" viewBox="0 0 32 32"><circle cx="8.5" cy="12.2" r="7.4" fill="url(#gr)"/><circle cx="23" cy="12.2" r="7.4" fill="url(#gg)"/><circle cx="15.7" cy="19.6" r="7.6" fill="url(#gp)"/><circle cx="6.2" cy="10" r="0.9" fill="#ffc0c0"/><circle cx="21" cy="10" r="0.9" fill="#c0ffc0"/><circle cx="13.6" cy="17.4" r="0.9" fill="#fff"/></svg><svg class="ic" style="left:11px;top:423px" width="32" height="32" viewBox="0 0 32 32"><clipPath id="cs"><rect width="32" height="32"/></clipPath><g clip-path="url(#cs)"><rect width="32" height="32" fill="#4242f6"/><g filter="url(#bl2)"><path d="M0 3.5 L4.4 10.1 L32 0 L32 2.2 L18.4 12.5 L11 19.8 L16.8 29.8 L5.1 27.6 L2.8 32 L0 32Z" fill="#40f4f0"/><path d="M7 16.4 L31.6 0.8 L32 1.6 L8 18Z" fill="#66f090"/><path d="M7 16.6 L17 10.4 L17.4 11.2 L8 17.6Z" fill="#d8e83c"/><ellipse cx="3.6" cy="19.4" rx="4.6" ry="6.6" fill="#70f060"/><ellipse cx="3.4" cy="19.4" rx="3.6" ry="5.2" fill="#ecf030"/><ellipse cx="0.6" cy="15.6" rx="1.6" ry="2.4" fill="#f8c020"/><path d="M2.4 16.8 L6.8 14.8 L7.4 16 L3.4 18.2Z" fill="#ff4020"/><path d="M3.2 20 L6.8 22.6 L6 23.4 L3 21.4Z" fill="#ff4020"/><ellipse cx="0.6" cy="22" rx="1.4" ry="1.7" fill="#ff3030"/><ellipse cx="10.8" cy="26" rx="1.6" ry="0.7" fill="#4a8cf8" transform="rotate(25 10.8 26)"/></g></g></svg><svg class="ic" style="left:11px;top:460px" width="32" height="32" viewBox="0 0 32 32"><rect width="32" height="32" fill="#fff"/><text x="1.2" y="19.4" font-family="Liberation Sans" font-weight="bold" font-size="10" fill="#7b9cbc" textLength="29.6" lengthAdjust="spacingAndGlyphs">PDB</text></svg><svg class="ic" style="left:11px;top:497px" width="32" height="32" viewBox="0 0 32 32"><circle cx="26.6" cy="21.7" r="2.1" fill="url(#gh)"/><circle cx="15.7" cy="27.1" r="2.1" fill="url(#gh)"/><circle cx="4.8" cy="21.7" r="2.1" fill="url(#gh)"/><circle cx="4.8" cy="10.9" r="2.1" fill="url(#gh)"/><circle cx="15.7" cy="5.5" r="2.1" fill="url(#gh)"/><circle cx="26.6" cy="10.9" r="2.1" fill="url(#gh)"/><circle cx="21.4" cy="19.3" r="4.2" fill="url(#gc)"/><circle cx="15.7" cy="22.3" r="4.2" fill="url(#gc)"/><circle cx="10.0" cy="19.3" r="4.2" fill="url(#gc)"/><circle cx="10.0" cy="13.3" r="4.2" fill="url(#gc)"/><circle cx="15.7" cy="10.3" r="4.2" fill="url(#gc)"/><circle cx="21.4" cy="13.3" r="4.2" fill="url(#gc)"/></svg><svg class="ic" style="left:11px;top:534px" width="32" height="32" viewBox="0 0 32 32"><g fill="#c3a8e0"><ellipse cx="7.6" cy="15.4" rx="7" ry="6"/><ellipse cx="15.6" cy="10.4" rx="6.6" ry="5.8"/><ellipse cx="24" cy="14.6" rx="6.8" ry="6.4"/><ellipse cx="15.6" cy="20" rx="7.6" ry="6.2"/><ellipse cx="20.4" cy="19.4" rx="5" ry="4.6"/></g><ellipse cx="13.6" cy="8.6" rx="3.2" ry="1.6" fill="#dccbf0"/><text x="11.4" y="20" font-family="Liberation Sans" font-weight="bold" font-size="12.4" fill="#000">P</text></svg><svg class="ic" style="left:11px;top:571px" width="32" height="32" viewBox="0 0 32 32"><text x="-2" y="13.4" font-family="Liberation Sans" font-size="13" fill="#e6ecf5" textLength="36" lengthAdjust="spacingAndGlyphs">Morph</text></svg><svg class="ic" style="left:11px;top:593px" width="32" height="32" viewBox="0 0 32 32"><path d="M12 5.6 L8.2 23.2 L24.8 18.8 Z" fill="none" stroke="#d0c8f0" stroke-width="1.6"/><circle cx="12" cy="5.7" r="7.5" fill="url(#gr)"/><circle cx="8.2" cy="23.3" r="6.3" fill="url(#gbl)"/><circle cx="24.8" cy="19" r="5.5" fill="url(#gor)"/></svg><svg class="ic" style="left:13px;top:632px" width="32" height="32" viewBox="0 0 32 32"><g filter="url(#sh)"><path d="M17.99 18.30 L17.99 20.90 L16.25 20.95 L15.92 21.95 L17.30 23.01 L15.78 25.11 L14.34 24.13 L13.49 24.75 L13.98 26.42 L11.51 27.22 L10.93 25.58 L9.87 25.58 L9.29 27.22 L6.82 26.42 L7.31 24.75 L6.46 24.13 L5.02 25.11 L3.50 23.01 L4.88 21.95 L4.55 20.95 L2.81 20.90 L2.81 18.30 L4.55 18.25 L4.88 17.25 L3.50 16.19 L5.02 14.09 L6.46 15.07 L7.31 14.45 L6.82 12.78 L9.29 11.98 L9.87 13.62 L10.93 13.62 L11.51 11.98 L13.98 12.78 L13.49 14.45 L14.34 15.07 L15.78 14.09 L17.30 16.19 L15.92 17.25 L16.25 18.25 Z" fill="url(#gw)" stroke="#1a2233" stroke-width="0.7" stroke-linejoin="round"/><circle cx="10.4" cy="19.6" r="3.8" fill="none" stroke="#6f93bf" stroke-width="1.4"/><circle cx="10.4" cy="19.6" r="1.5" fill="#1c2638"/><path d="M24.02 8.45 L24.02 10.35 L22.69 10.36 L22.46 11.08 L23.52 11.88 L22.41 13.41 L21.32 12.64 L20.71 13.09 L21.10 14.36 L19.31 14.94 L18.88 13.68 L18.12 13.68 L17.69 14.94 L15.90 14.36 L16.29 13.09 L15.68 12.64 L14.59 13.41 L13.48 11.88 L14.54 11.08 L14.31 10.36 L12.98 10.35 L12.98 8.45 L14.31 8.44 L14.54 7.72 L13.48 6.92 L14.59 5.39 L15.68 6.16 L16.29 5.71 L15.90 4.44 L17.69 3.86 L18.12 5.12 L18.88 5.12 L19.31 3.86 L21.10 4.44 L20.71 5.71 L21.32 6.16 L22.41 5.39 L23.52 6.92 L22.46 7.72 L22.69 8.44 Z" fill="url(#gw)" stroke="#1a2233" stroke-width="0.7" stroke-linejoin="round"/><circle cx="18.5" cy="9.4" r="2.6" fill="none" stroke="#6f93bf" stroke-width="1"/><circle cx="18.5" cy="9.4" r="1" fill="#1c2638"/></g><path d="M20.8 -0.8 L32.2 -0.8 L26.5 8 Z" fill="url(#gtri)"/></svg><div class="seph" style="left:6px;top:628px;width:44px"></div></div>
<div class="panel" style="left:47px;top:119px;width:248px;height:936px">
<div class="phead"><svg class="ic" style="left:9px;top:4px" width="16" height="16" viewBox="0 0 16 16"><g filter="url(#sh)"><rect x="1.2" y="0.5" width="4.1" height="5.3" rx="0.7" fill="#d6e9fb"/><path d="M3.4 5.8v7.8q0 1 1 1h4.4M3.4 9h5.4" fill="none" stroke="#b5d4f2" stroke-width="1"/><path d="M9 9L11.7 7.2L14.4 9L11.7 10.8Z" fill="#cfe4f8"/><path d="M9 14.6L11.7 12.8L14.4 14.6L11.7 16.4Z" fill="#cfe4f8"/></g></svg><b style="left:37px">Document view</b><svg class="ic" style="left:199px;top:5px" width="16" height="16" viewBox="0 0 16 16"><g filter="url(#sh)"><path d="M4.2 7.4 V5 Q4.2 1.6 7.6 1.6 Q10.2 1.6 10.8 3.8" fill="none" stroke="#7fa5d0" stroke-width="1.5"/><rect x="2.4" y="7.4" width="11.2" height="7.6" rx="0.6" fill="#6f9aca"/><path d="M8 9.6 v3" stroke="#22344e" stroke-width="1.4"/></g></svg><svg class="ic" style="left:222px;top:5px" width="16" height="16" viewBox="0 0 16 16"><g stroke="#22314a" stroke-width="1.8" stroke-linejoin="round" paint-order="stroke" filter="url(#sh)"><g transform="rotate(45 8 8.1)"><path d="M5.95 0.2h4.1v5.85h5.85v4.1h-5.85v5.85h-4.1v-5.85h-5.85v-4.1h5.85z" fill="#9abbe0"/></g></g><g transform="rotate(45 8 8.1)"><path d="M6.55 0.8h2.9v5.85h5.85v2.9h-5.85v5.85h-2.9v-5.85h-5.85v-2.9h5.85z" fill="#6f9bca"/></g></svg></div>
</div>
<div class="a" style="left:101px;top:176px;width:186px;height:44px;background:#546b8b"></div><svg class="a" style="left:0;top:0" width="320" height="260" viewBox="0 0 320 260" fill="#000"><defs><linearGradient id="gchk" x1="0" y1="0" x2="1" y2="1"><stop offset="0" stop-color="#cfd2d9"/><stop offset="1" stop-color="#f4f4f4"/></linearGradient></defs><rect x="62.5" y="154" width="2" height="22"/><rect x="63.5" y="164" width="12.5" height="2"/><rect x="58" y="160" width="11" height="10" fill="#3a4f6e" stroke="#000" stroke-width="2"/><rect x="60" y="164" width="7" height="2"/><rect x="87.5" y="176" width="2" height="44"/><rect x="88" y="186" width="13" height="2"/><rect x="87.5" y="209" width="2" height="11"/><rect x="88.5" y="208" width="12.5" height="2"/><rect x="83" y="204" width="11" height="10" fill="#3a4f6e" stroke="#000" stroke-width="2"/><rect x="85" y="208" width="7" height="2"/><rect x="112.5" y="220" width="2" height="22"/><rect x="113.5" y="230" width="12.5" height="2"/><rect x="108" y="226" width="11" height="10" fill="#3a4f6e" stroke="#000" stroke-width="2"/><rect x="110" y="230" width="7" height="2"/><rect x="112.5" y="228" width="2" height="6"/><rect x="104.5" y="201.5" width="15" height="15" fill="#f6f6f6" stroke="#b3aea6" stroke-width="1"/><rect x="106.2" y="203.2" width="11.6" height="11.6" fill="url(#gchk)"/><path d="M108 209.2 l1.9 -0.8 l1.3 2.7 q1.9 -4.4 4.5 -7.4 l1.1 0.7 q-2.7 4 -4.6 9.7 l-1.7 0 z" fill="#3c52a3"/><rect x="129.5" y="223.5" width="15" height="15" fill="#f6f6f6" stroke="#b3aea6" stroke-width="1"/><rect x="131.2" y="225.2" width="11.6" height="11.6" fill="url(#gchk)"/><path d="M133 231.2 l1.9 -0.8 l1.3 2.7 q1.9 -4.4 4.5 -7.4 l1.1 0.7 q-2.7 4 -4.6 9.7 l-1.7 0 z" fill="#3c52a3"/></svg><svg class="ic" style="left:82px;top:155px" width="16" height="20" viewBox="0 0 16 20"><g stroke="#0c1322" stroke-width="1.6" stroke-linejoin="round" paint-order="stroke" filter="url(#sh)"><path d="M2.1 1 h7.8 l4 4 v11.9 q0 1-1 1 h-10.8 q-1 0-1-1 v-14.9 q0-1 1-1z" fill="#a6ccf0"/></g><path d="M9.9 1 v4 h4 z" fill="#dcecfb"/></svg><div class="t" style="left:105px;top:159px">Document 1</div><svg class="ic" style="left:104px;top:178px" width="20" height="16" viewBox="0 0 20 16"><g stroke="#0c1322" stroke-width="1.6" stroke-linejoin="round" paint-order="stroke" filter="url(#sh)"><path d="M1.2 3.4 h4.4 l1-2.4 h7 l1 2.4 h3.8 q.8 0 .8.8 v9.6 q0 .8-.8.8 h-17.2 q-.8 0-.8-.8 v-9.6 q0-.8.8-.8z" fill="#a6cdf2"/></g><circle cx="10" cy="8.8" r="4.6" fill="#23344e"/><circle cx="10" cy="9" r="2.8" fill="#d9d9d9"/></svg><div class="t" style="left:130px;top:181px;letter-spacing:-0.3px">Camera 1</div><svg class="ic" style="left:126px;top:201px" width="20" height="16" viewBox="0 0 20 16"><g stroke="#0c1322" stroke-width="1.6" stroke-linejoin="round" paint-order="stroke" filter="url(#sh)"><path d="M0.8 7.5L9.9 1.8L19 7.5L9.9 13.2Z" fill="url(#gb2)"/></g><path d="M9.9 1.8 L13.6 7.5 L9.9 13.2 L11.8 7.5Z" fill="#e4f0fc" opacity=".5"/></svg><div class="t" style="left:152px;top:203px;letter-spacing:-0.4px">Layer 1</div><svg class="ic" style="left:152px;top:222px" width="18" height="18" viewBox="0 0 18 18"><path d="M9 0.8 Q12.6 0.8 12.8 4.4 L12.6 7.4 Q17 9 17.4 12.4 Q17 16.4 13 16.6 Q10.4 16.6 9 14.8 Q7.6 16.6 5 16.6 Q1 16.4 0.6 12.4 Q1 9 5.4 7.4 L5.2 4.4 Q5.4 0.8 9 0.8Z" fill="#2e8ed8" stroke="#0c1322" stroke-width="1" filter="url(#sh)"/><path d="M7 4 Q7.4 2.4 9.4 2.4" stroke="#9ad4ff" stroke-width="1" fill="none"/></svg><div class="t" style="left:177px;top:225px">Structural model</div>
<div id="view" class="a"></div>
<svg class="a" style="left:300px;top:119px" width="1393" height="936" viewBox="300 119 1393 936">
<defs><radialGradient id="ag" cx="0.36" cy="0.30" r="0.62" fx="0.33" fy="0.25"><stop offset="0" stop-color="#f4f4f4"/><stop offset="0.09" stop-color="#b4b5b8"/><stop offset="0.24" stop-color="#6f7175"/><stop offset="0.6" stop-color="#56585c"/><stop offset="0.85" stop-color="#494a4e"/><stop offset="1" stop-color="#3b3c40"/></radialGradient><g id="at"><circle r="8.3" fill="url(#ag)"/></g></defs>
<use href="#at" x="601.6" y="343.0"/>
<use href="#at" x="641.4" y="343.0"/>
<use href="#at" x="720.9" y="343.0"/>
<use href="#at" x="760.7" y="343.0"/>
<use href="#at" x="840.2" y="343.0"/>
<use href="#at" x="880.0" y="343.0"/>
<use href="#at" x="959.5" y="343.0"/>
<use href="#at" x="999.3" y="343.0"/>
<use href="#at" x="1078.8" y="343.0"/>
<use href="#at" x="1118.6" y="343.0"/>
<use href="#at" x="581.7" y="377.4"/>
<use href="#at" x="661.3" y="377.4"/>
<use href="#at" x="701.0" y="377.4"/>
<use href="#at" x="780.6" y="377.4"/>
<use href="#at" x="820.3" y="377.4"/>
<use href="#at" x="899.9" y="377.4"/>
<use href="#at" x="939.6" y="377.4"/>
<use href="#at" x="1019.2" y="377.4"/>
<use href="#at" x="1059.0" y="377.4"/>
<use href="#at" x="1138.5" y="377.4"/>
<use href="#at" x="601.6" y="411.8"/>
<use href="#at" x="641.4" y="411.8"/>
<use href="#at" x="720.9" y="411.8"/>
<use href="#at" x="760.7" y="411.8"/>
<use href="#at" x="840.2" y="411.8"/>
<use href="#at" x="880.0" y="411.8"/>
<use href="#at" x="959.5" y="411.8"/>
<use href="#at" x="999.3" y="411.8"/>
<use href="#at" x="1078.8" y="411.8"/>
<use href="#at" x="1118.6" y="411.8"/>
<use href="#at" x="581.7" y="446.2"/>
<use href="#at" x="661.3" y="446.2"/>
<use href="#at" x="701.0" y="446.2"/>
<use href="#at" x="780.6" y="446.2"/>
<use href="#at" x="820.3" y="446.2"/>
<use href="#at" x="899.9" y="446.2"/>
<use href="#at" x="939.6" y="446.2"/>
<use href="#at" x="1019.2" y="446.2"/>
<use href="#at" x="1059.0" y="446.2"/>
<use href="#at" x="1138.5" y="446.2"/>
<use href="#at" x="601.6" y="480.6"/>
<use href="#at" x="641.4" y="480.6"/>
<use href="#at" x="720.9" y="480.6"/>
<use href="#at" x="760.7" y="480.6"/>
<use href="#at" x="840.2" y="480.6"/>
<use href="#at" x="880.0" y="480.6"/>
<use href="#at" x="959.5" y="480.6"/>
<use href="#at" x="999.3" y="480.6"/>
<use href="#at" x="1078.8" y="480.6"/>
<use href="#at" x="1118.6" y="480.6"/>
<use href="#at" x="581.7" y="515.0"/>
<use href="#at" x="661.3" y="515.0"/>
<use href="#at" x="701.0" y="515.0"/>
<use href="#at" x="780.6" y="515.0"/>
<use href="#at" x="820.3" y="515.0"/>
<use href="#at" x="899.9" y="515.0"/>
<use href="#at" x="939.6" y="515.0"/>
<use href="#at" x="1019.2" y="515.0"/>
<use href="#at" x="1059.0" y="515.0"/>
<use href="#at" x="1138.5" y="515.0"/>
<use href="#at" x="601.6" y="549.4"/>
<use href="#at" x="641.4" y="549.4"/>
<use href="#at" x="720.9" y="549.4"/>
<use href="#at" x="760.7" y="549.4"/>
<use href="#at" x="840.2" y="549.4"/>
<use href="#at" x="880.0" y="549.4"/>
<use href="#at" x="959.5" y="549.4"/>
<use href="#at" x="999.3" y="549.4"/>
<use href="#at" x="1078.8" y="549.4"/>
<use href="#at" x="1118.6" y="549.4"/>
<use href="#at" x="581.7" y="583.8"/>
<use href="#at" x="661.3" y="583.8"/>
<use href="#at" x="701.0" y="583.8"/>
<use href="#at" x="780.6" y="583.8"/>
<use href="#at" x="820.3" y="583.8"/>
<use href="#at" x="899.9" y="583.8"/>
<use href="#at" x="939.6" y="583.8"/>
<use href="#at" x="1019.2" y="583.8"/>
<use href="#at" x="1059.0" y="583.8"/>
<use href="#at" x="1138.5" y="583.8"/>
<use href="#at" x="601.6" y="618.2"/>
<use href="#at" x="641.4" y="618.2"/>
<use href="#at" x="720.9" y="618.2"/>
<use href="#at" x="760.7" y="618.2"/>
<use href="#at" x="840.2" y="618.2"/>
<use href="#at" x="880.0" y="618.2"/>
<use href="#at" x="959.5" y="618.2"/>
<use href="#at" x="999.3" y="618.2"/>
<use href="#at" x="1078.8" y="618.2"/>
<use href="#at" x="1118.6" y="618.2"/>
<use href="#at" x="581.7" y="652.6"/>
<use href="#at" x="661.3" y="652.6"/>
<use href="#at" x="701.0" y="652.6"/>
<use href="#at" x="780.6" y="652.6"/>
<use href="#at" x="820.3" y="652.6"/>
<use href="#at" x="899.9" y="652.6"/>
<use href="#at" x="939.6" y="652.6"/>
<use href="#at" x="1019.2" y="652.6"/>
<use href="#at" x="1059.0" y="652.6"/>
<use href="#at" x="1138.5" y="652.6"/>
<use href="#at" x="601.6" y="687.0"/>
<use href="#at" x="641.4" y="687.0"/>
<use href="#at" x="720.9" y="687.0"/>
<use href="#at" x="760.7" y="687.0"/>
<use href="#at" x="840.2" y="687.0"/>
<use href="#at" x="880.0" y="687.0"/>
<use href="#at" x="959.5" y="687.0"/>
<use href="#at" x="999.3" y="687.0"/>
<use href="#at" x="1078.8" y="687.0"/>
<use href="#at" x="1118.6" y="687.0"/>
<use href="#at" x="581.7" y="721.4"/>
<use href="#at" x="661.3" y="721.4"/>
<use href="#at" x="701.0" y="721.4"/>
<use href="#at" x="780.6" y="721.4"/>
<use href="#at" x="820.3" y="721.4"/>
<use href="#at" x="899.9" y="721.4"/>
<use href="#at" x="939.6" y="721.4"/>
<use href="#at" x="1019.2" y="721.4"/>
<use href="#at" x="1059.0" y="721.4"/>
<use href="#at" x="1138.5" y="721.4"/>
<use href="#at" x="601.6" y="755.8"/>
<use href="#at" x="641.4" y="755.8"/>
<use href="#at" x="720.9" y="755.8"/>
<use href="#at" x="760.7" y="755.8"/>
<use href="#at" x="840.2" y="755.8"/>
<use href="#at" x="880.0" y="755.8"/>
<use href="#at" x="959.5" y="755.8"/>
<use href="#at" x="999.3" y="755.8"/>
<use href="#at" x="1078.8" y="755.8"/>
<use href="#at" x="1118.6" y="755.8"/>
<use href="#at" x="581.7" y="790.2"/>
<use href="#at" x="661.3" y="790.2"/>
<use href="#at" x="701.0" y="790.2"/>
<use href="#at" x="780.6" y="790.2"/>
<use href="#at" x="820.3" y="790.2"/>
<use href="#at" x="899.9" y="790.2"/>
<use href="#at" x="939.6" y="790.2"/>
<use href="#at" x="1019.2" y="790.2"/>
<use href="#at" x="1059.0" y="790.2"/>
<use href="#at" x="1138.5" y="790.2"/>
<use href="#at" x="601.6" y="824.6"/>
<use href="#at" x="641.4" y="824.6"/>
<use href="#at" x="720.9" y="824.6"/>
<use href="#at" x="760.7" y="824.6"/>
<use href="#at" x="840.2" y="824.6"/>
<use href="#at" x="880.0" y="824.6"/>
<use href="#at" x="959.5" y="824.6"/>
<use href="#at" x="999.3" y="824.6"/>
<use href="#at" x="1078.8" y="824.6"/>
<use href="#at" x="1118.6" y="824.6"/>
</svg>
<div class="panel" style="left:1698px;top:119px;width:165px;height:936px">
<div class="phead"><svg class="ic" style="left:9px;top:5px" width="16" height="16" viewBox="0 0 16 16"><g filter="url(#sh)"><path d="M1.4 3.2h5M1.4 6.2h5M1.4 9.2h5M1.4 12.2h5" stroke="#c9d6e6" stroke-width="1.1" fill="none"/><path d="M8 3.8 L11.6 2.6 L11.2 4.6 Q14 7 13 10 Q12 12.4 9 13 Q11.8 11 11.6 8.6 Q11.4 6.8 10.2 6 L9.8 7 Z" fill="#bcd8f3"/></g></svg><b style="left:37px">History</b><svg class="ic" style="left:117px;top:5px" width="16" height="16" viewBox="0 0 16 16"><g filter="url(#sh)"><path d="M4.2 7.4 V5 Q4.2 1.6 7.6 1.6 Q10.2 1.6 10.8 3.8" fill="none" stroke="#7fa5d0" stroke-width="1.5"/><rect x="2.4" y="7.4" width="11.2" height="7.6" rx="0.6" fill="#6f9aca"/><path d="M8 9.6 v3" stroke="#22344e" stroke-width="1.4"/></g></svg><svg class="ic" style="left:139px;top:5px" width="16" height="16" viewBox="0 0 16 16"><g stroke="#22314a" stroke-width="1.8" stroke-linejoin="round" paint-order="stroke" filter="url(#sh)"><g transform="rotate(45 8 8.1)"><path d="M5.95 0.2h4.1v5.85h5.85v4.1h-5.85v5.85h-4.1v-5.85h-5.85v-4.1h5.85z" fill="#9abbe0"/></g></g><g transform="rotate(45 8 8.1)"><path d="M6.55 0.8h2.9v5.85h5.85v2.9h-5.85v5.85h-2.9v-5.85h-5.85v-2.9h5.85z" fill="#6f9bca"/></g></svg></div>
</div>
<div class="t" style="left:1705px;top:156px">New document</div><div class="t" style="left:1705px;top:173px">Add structural model</div><div class="a" style="left:1702px;top:188px;width:157px;height:17px;border-radius:4px;background:linear-gradient(#b9bdc7,#a0a5b1);border:1px solid #8f95a3"></div><div class="t" style="left:1705px;top:190px;color:#f6f8fb">Add graphene sheet</div>
<div class="a" id="dlg" style="left:1210px;top:253px;width:282px;height:263px;background:#33425a;border-radius:3px 3px 0 0;box-shadow:inset 0 0 0 1px #87a2c4,inset 0 0 0 2px #111d3e,10px 10px 14px rgba(20,28,42,.7)"><div class="a" style="left:2px;top:1px;width:278px;height:30px;background:#45607f;border-radius:2px 2px 0 0"></div><b class="t" style="left:27px;top:9px;color:#fff;text-shadow:0 1px 1px #223">New simulator</b><svg class="ic" style="left:257.6px;top:7px" width="16" height="16" viewBox="0 0 16 16"><g stroke="#22314a" stroke-width="1.8" stroke-linejoin="round" paint-order="stroke" filter="url(#sh)"><g transform="rotate(45 8 8.1)"><path d="M5.95 0.2h4.1v5.85h5.85v4.1h-5.85v5.85h-4.1v-5.85h-5.85v-4.1h5.85z" fill="#9abbe0"/></g></g><g transform="rotate(45 8 8.1)"><path d="M6.55 0.8h2.9v5.85h5.85v2.9h-5.85v5.85h-2.9v-5.85h-5.85v-2.9h5.85z" fill="#6f9bca"/></g></svg><div class="t" style="left:11px;top:44px">Set simulator name</div><div class="a" style="left:11px;top:65px;width:259px;height:24px;border-radius:4px;background:linear-gradient(#d9dbe0,#e4e5e9 40%,#eeeef1);border:1px solid #1b273d;box-shadow:inset 0 1px 1px #b4b8c2"></div><div class="t" style="left:18px;top:71px;color:#1c1c1c">Simulator 1</div><div class="t" style="left:11px;top:98px">Select interaction model</div><div class="a" style="left:11px;top:119px;width:259px;height:24px;border-radius:4px;background:linear-gradient(#d9dbe0,#e4e5e9 40%,#eeeef1);border:1px solid #1b273d;box-shadow:inset 0 1px 1px #b4b8c2"></div><div class="t" style="left:15px;top:125px;color:#1c1c1c">Lennard-Jones</div><div class="a" style="left:250px;top:123px;width:16px;height:16px;border-radius:2px;background:linear-gradient(#2a6a9e,#347fb4);border:1px solid #1d4f78"></div><svg class="a" style="left:250px;top:123px" width="16" height="16"><path d="M4.6 6 L11.4 6 L8 11.6 Z" fill="#fff"/></svg><div class="t" style="left:11px;top:152px">Select state updater</div><div class="a" style="left:11px;top:173px;width:259px;height:24px;border-radius:4px;background:linear-gradient(#d9dbe0,#e4e5e9 40%,#eeeef1);border:1px solid #1b273d;box-shadow:inset 0 1px 1px #b4b8c2"></div><div class="t" style="left:15px;top:179px;color:#1c1c1c">Interactive modeling</div><div class="a" style="left:250px;top:177px;width:16px;height:16px;border-radius:2px;background:linear-gradient(#2a6a9e,#347fb4);border:1px solid #1d4f78"></div><svg class="a" style="left:250px;top:177px" width="16" height="16"><path d="M4.6 6 L11.4 6 L8 11.6 Z" fill="#fff"/></svg><div class="a" style="left:11px;top:227px;width:125px;height:22px;border-radius:4px;background:linear-gradient(#6c9cce 0,#5a8bbe 25%,#5383b6 55%,#5b8bbe 100%);border:1px solid #1d2738;box-shadow:0 0 0 0.5px #1d2738;color:#f2f5fa;font-size:12px;line-height:23.5px;text-align:center">Cancel</div><div class="a" style="left:145px;top:227px;width:124px;height:22px;border-radius:4px;background:linear-gradient(#6c9cce 0,#5a8bbe 25%,#5383b6 55%,#5b8bbe 100%);border:1px solid #1d2738;box-shadow:0 0 0 0.5px #1d2738;color:#f2f5fa;font-size:12px;line-height:23.5px;text-align:center">OK</div></div>
<div id="status" class="a"></div>
</body></html>
